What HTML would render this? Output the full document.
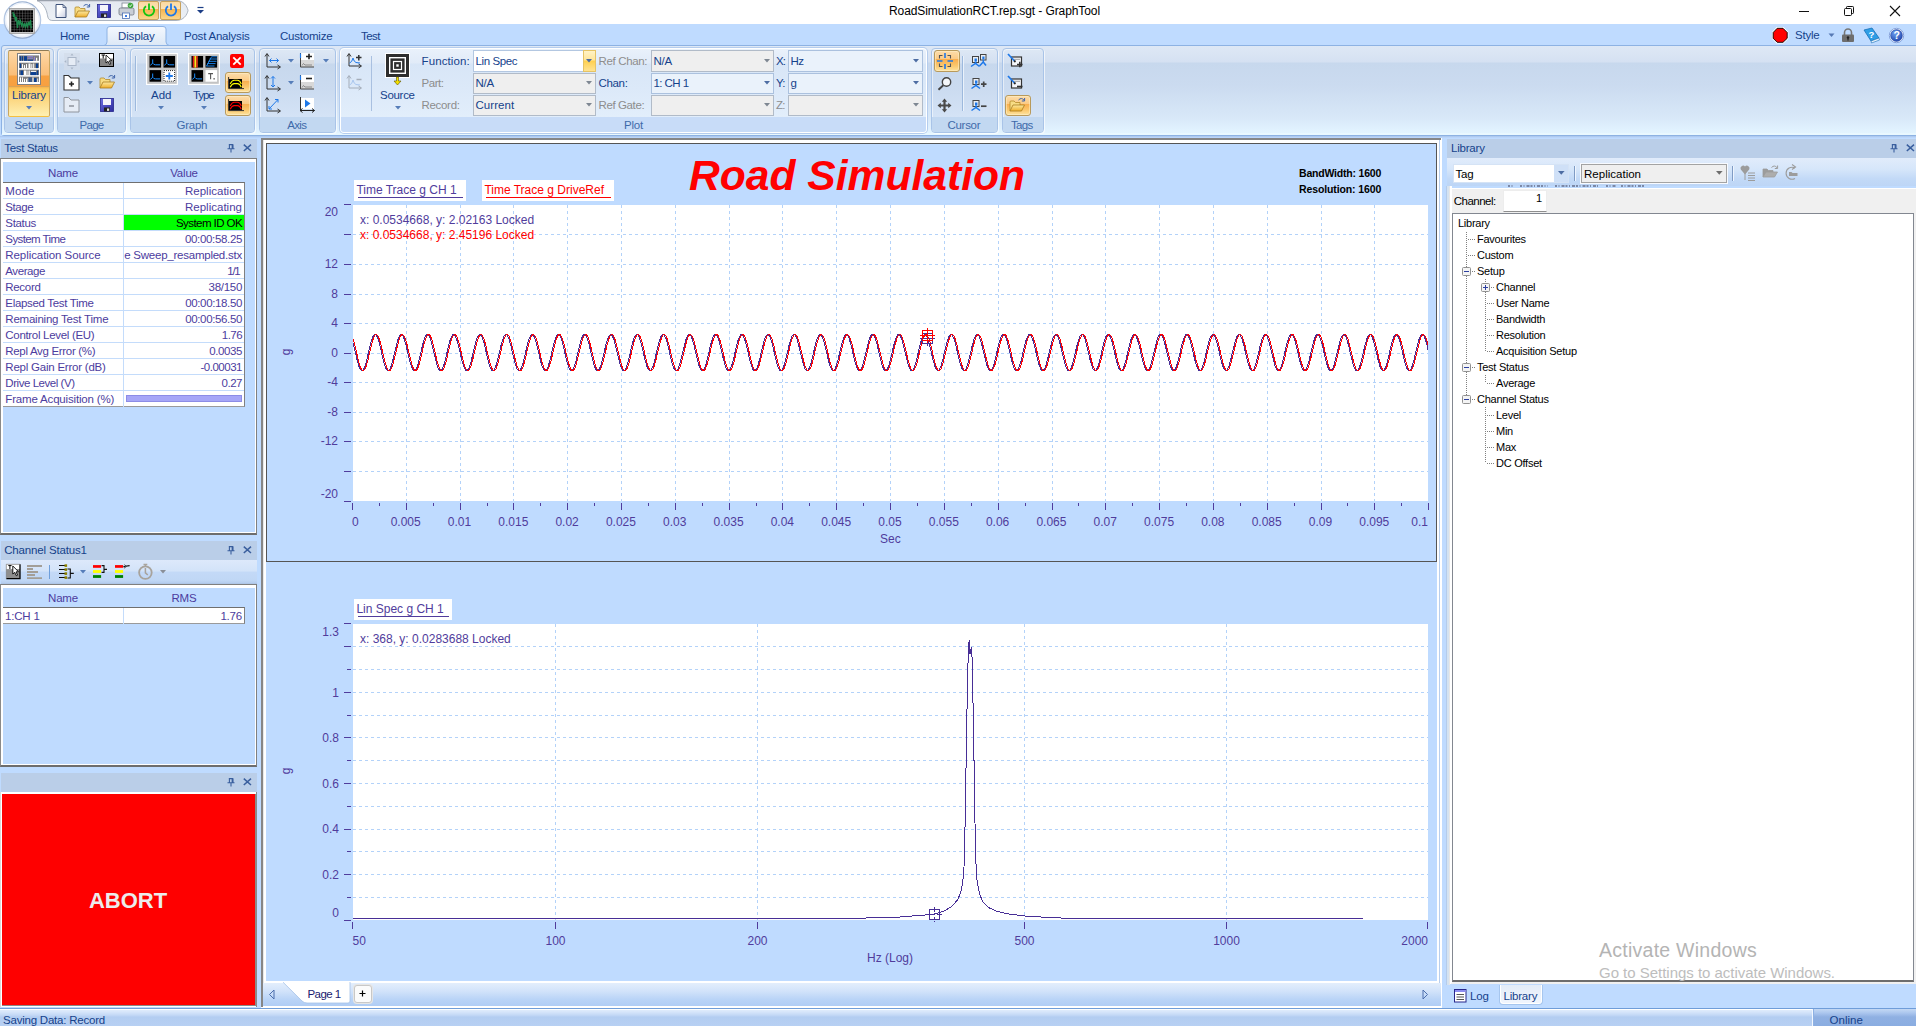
<!DOCTYPE html>
<html><head><meta charset="utf-8"><title>GraphTool</title>
<style>
html,body{margin:0;padding:0;}
body{width:1916px;height:1026px;overflow:hidden;background:#BFDBFF;font-family:"Liberation Sans", sans-serif;font-size:12px;position:relative;}
div,svg,span.a{position:absolute;box-sizing:border-box;}
svg{overflow:visible;}
</style></head>
<body>
<div style="left:0px;top:0px;width:1916px;height:24px;background:#fff;"></div>
<svg style="left:36px;top:0px;" width="160" height="22" viewBox="0 0 160 22"><defs><linearGradient id="qg" x1="0" y1="0" x2="0" y2="1"><stop offset="0" stop-color="#E4E9F0"/><stop offset="1" stop-color="#EDF1F6"/></linearGradient></defs><path d="M1,0.5 H140 C150,0.5 152,10 152,10.5 C152,11 150,20.5 140,20.5 H17 C11.5,20.5 12,17 11,13 C9.5,7 6,2.5 1,0.5 Z" fill="url(#qg)" stroke="#A9B2BF" stroke-width="1"/><path d="M1,0.6 H142" stroke="#9AA1AC" stroke-width="1.4" fill="none"/></svg>
<svg style="left:55px;top:3px;" width="13" height="16" viewBox="0 0 13 16"><defs><linearGradient id="nd" x1="0" y1="0" x2="1" y2="1"><stop offset="0.4" stop-color="#fff"/><stop offset="1" stop-color="#C5CBE0"/></linearGradient></defs><path d="M1,1.5 H8 L11,4.5 V14.5 H1 Z" fill="url(#nd)" stroke="#3C5078" stroke-width="1"/><path d="M8,1.5 V4.5 H11" fill="none" stroke="#3C5078" stroke-width="0.8"/></svg>
<svg style="left:74px;top:3px;" width="18" height="16" viewBox="0 0 18 16"><defs><linearGradient id="fo" x1="0" y1="0" x2="0" y2="1"><stop offset="0" stop-color="#FCE9A0"/><stop offset="1" stop-color="#EFAE2B"/></linearGradient></defs><path d="M1,14 V5 Q1,4 2,4 H5 L6.5,5.5 H11 V8" fill="#F7DC84" stroke="#B48A2A" stroke-width="0.8"/><path d="M1,14 L4,8 H15.5 L12.5,14 Z" fill="url(#fo)" stroke="#A87B1E" stroke-width="0.8"/><path d="M9.5,3 Q12.5,0 15,3.2" fill="none" stroke="#3E63A8" stroke-width="1"/><path d="M15.6,1 V4 H12.8" fill="none" stroke="#3E63A8" stroke-width="1"/></svg>
<svg style="left:97px;top:4px;" width="14" height="14" viewBox="0 0 14 14"><defs><linearGradient id="dk" x1="0" y1="0" x2="1" y2="1"><stop offset="0" stop-color="#6D6DE0"/><stop offset="1" stop-color="#2B2B9E"/></linearGradient></defs><rect x="0.5" y="0.5" width="13" height="13" fill="url(#dk)" stroke="#27278C" stroke-width="0.8"/><rect x="3" y="1" width="8" height="6" fill="#F4F4FA"/><rect x="4" y="9.5" width="6" height="4" fill="#222"/><rect x="7" y="10.5" width="2.2" height="2.4" fill="#ddd"/></svg>
<svg style="left:118px;top:2px;" width="18" height="18" viewBox="0 0 18 18"><rect x="4" y="1" width="8" height="5" fill="#fff" stroke="#7d8592" stroke-width="0.8"/><rect x="1" y="6" width="15" height="7" rx="1.5" fill="#C9CED6" stroke="#6E7682" stroke-width="0.8"/><rect x="4.5" y="11" width="7" height="5.5" fill="#fff" stroke="#4B6FB5" stroke-width="0.8"/><rect x="7" y="13" width="2" height="2" fill="#3D7BE0"/><circle cx="12.5" cy="3.5" r="2.8" fill="#3DA53D"/><path d="M11.2,3.5 L12.2,4.6 L13.9,2.4" stroke="#fff" stroke-width="0.9" fill="none"/></svg>
<div style="left:138px;top:1px;width:21px;height:19px;border:1px solid #C9A25C;border-radius:2px;background:linear-gradient(#FBD9A0 0%,#FCE2B4 40%,#F7B44E 42%,#FBD68B 100%);"></div>
<svg style="left:141px;top:2px;" width="16" height="16" viewBox="0 0 16 16"><path d="M5,4.2 A5.2,5.2 0 1 0 11,4.2" fill="none" stroke="#12C412" stroke-width="1.8"/><path d="M8,1.5 V8" stroke="#12C412" stroke-width="1.8"/></svg>
<div style="left:160px;top:1px;width:21px;height:19px;border:1px solid #C9A25C;border-radius:2px;background:linear-gradient(#FBD9A0 0%,#FCE2B4 40%,#F7B44E 42%,#FBD68B 100%);"></div>
<svg style="left:163px;top:2px;" width="16" height="16" viewBox="0 0 16 16"><path d="M5,4.2 A5.2,5.2 0 1 0 11,4.2" fill="none" stroke="#1E78E8" stroke-width="1.8"/><path d="M8,1.5 V8" stroke="#1E78E8" stroke-width="1.8"/></svg>
<svg style="left:196px;top:6px;" width="10" height="9" viewBox="0 0 10 9"><path d="M1.5,1.5 H7.5" stroke="#1C3E86" stroke-width="1.2"/><path d="M1,4 H8 L4.5,7.5 Z" fill="#1C3E86"/></svg>
<div style="left:889px;top:1.0px;height:20px;line-height:20px;font-size:12px;color:#000;white-space:pre;letter-spacing:-0.083px;">RoadSimulationRCT.rep.sgt - GraphTool</div>
<svg style="left:1795px;top:0px;" width="121" height="24" viewBox="0 0 121 24"><path d="M4,11.5 H14" stroke="#111" stroke-width="1"/><rect x="49.5" y="8.5" width="7" height="7" rx="1" fill="none" stroke="#111" stroke-width="1"/><path d="M51.5,8.5 V7.3 Q51.5,6.5 52.3,6.5 H57.7 Q58.5,6.5 58.5,7.3 V12.7 Q58.5,13.5 57.7,13.5 H56.5" fill="none" stroke="#111" stroke-width="1"/><path d="M95,6 L105,16 M105,6 L95,16" stroke="#111" stroke-width="1.1"/></svg>
<div style="left:0px;top:24px;width:1916px;height:21px;background:#BFDBFF;"></div>
<svg style="left:104px;top:24px;" width="66" height="22" viewBox="0 0 66 22"><defs><linearGradient id="tg" x1="0" y1="0" x2="0" y2="1"><stop offset="0" stop-color="#F4F8FE"/><stop offset="1" stop-color="#DCE8F6"/></linearGradient></defs><path d="M0,21.5 Q2.5,21.5 3,18 V5 Q3,2.5 6,2.5 H59 Q62,2.5 62,5 V18 Q62.5,21.5 65.5,21.5 Z" fill="url(#tg)" stroke="#8DB2E3" stroke-width="1"/><path d="M4,21.5 H61" stroke="#DCE8F6" stroke-width="1.5"/></svg>
<div style="left:60px;top:26.0px;height:20px;line-height:20px;font-size:11.5px;color:#15428B;white-space:pre;letter-spacing:-0.319px;">Home</div>
<div style="left:118px;top:26.0px;height:20px;line-height:20px;font-size:11.5px;color:#15428B;white-space:pre;letter-spacing:-0.144px;">Display</div>
<div style="left:184px;top:26.0px;height:20px;line-height:20px;font-size:11.5px;color:#15428B;white-space:pre;letter-spacing:-0.223px;">Post Analysis</div>
<div style="left:280px;top:26.0px;height:20px;line-height:20px;font-size:11.5px;color:#15428B;white-space:pre;letter-spacing:-0.213px;">Customize</div>
<div style="left:361px;top:26.0px;height:20px;line-height:20px;font-size:11.5px;color:#15428B;white-space:pre;letter-spacing:-0.522px;">Test</div>
<svg style="left:1770px;top:26px;" width="20" height="18" viewBox="0 0 20 18"><path d="M7.2,2.3 H13 L17.2,6.5 V12.3 L13,16.3 H7.2 L3.2,12.3 V6.5 Z" fill="#FF0000" stroke="#fff" stroke-width="2.4"/><path d="M7.2,2.3 H13 L17.2,6.5 V12.3 L13,16.3 H7.2 L3.2,12.3 V6.5 Z" fill="#FF0000" stroke="#000" stroke-width="0.9"/></svg>
<div style="left:1795px;top:25.0px;height:20px;line-height:20px;font-size:11.5px;color:#15428B;white-space:pre;letter-spacing:-0.2px;">Style</div>
<svg style="left:1828px;top:33px;" width="8" height="5" viewBox="0 0 8 5"><path d="M0.5,0.5 H6.5 L3.5,4 Z" fill="#5679B4"/></svg>
<svg style="left:1841px;top:28px;" width="14" height="15" viewBox="0 0 14 15"><path d="M3.5,7 V4.5 A3.3,3.3 0 0 1 10.5,4.5 V7" fill="none" stroke="#777" stroke-width="1.6"/><rect x="1" y="6.5" width="12" height="7.5" rx="1" fill="#6E6E6E"/><circle cx="7" cy="9.5" r="1.2" fill="#222"/><rect x="6.4" y="9.5" width="1.2" height="3" fill="#222"/></svg>
<svg style="left:1863px;top:27px;" width="18" height="17" viewBox="0 0 18 17"><path d="M1,3 L9,1 L16,11 L8,14 Z" fill="#2E9EE6" stroke="#1670B8" stroke-width="0.8"/><path d="M8,14 L16,11 L16.5,13 L8.5,16 Z" fill="#EAF2FA" stroke="#1670B8" stroke-width="0.6"/><text x="5.5" y="10.8" font-size="9.5" font-weight="bold" fill="#fff" font-family="Liberation Sans">?</text></svg>
<svg style="left:1888.5px;top:28px;" width="15" height="15" viewBox="0 0 15 15"><defs><radialGradient id="hg" cx="0.4" cy="0.3" r="0.8"><stop offset="0" stop-color="#6FA0F0"/><stop offset="1" stop-color="#1B3FA8"/></radialGradient></defs><circle cx="7.5" cy="7.5" r="7.2" fill="#fff" stroke="#6F8FD0" stroke-width="0.8"/><circle cx="7.5" cy="7.5" r="5.9" fill="url(#hg)" stroke="#2448A8" stroke-width="0.6"/><text x="4.6" y="11.3" font-size="10.5" font-weight="bold" fill="#fff" font-family="Liberation Sans">?</text></svg>
<svg style="left:0px;top:0px;" width="46" height="42" viewBox="0 0 46 42"><defs><radialGradient id="ab" cx="0.5" cy="0.45" r="0.6"><stop offset="0.72" stop-color="#fff"/><stop offset="1" stop-color="#CFDDF0"/></radialGradient><linearGradient id="abr" x1="0" y1="0" x2="0" y2="1"><stop offset="0" stop-color="#9DB3D3"/><stop offset="0.5" stop-color="#B9CBE6"/><stop offset="1" stop-color="#8FA6C9"/></linearGradient><pattern id="grd" width="2.75" height="2.75" patternUnits="userSpaceOnUse" x="11" y="10"><rect width="2.75" height="2.75" fill="#000"/><path d="M0,0 H2.75 M0,0 V2.75" stroke="#8a8a8a" stroke-width="0.7"/></pattern></defs><circle cx="22.4" cy="20" r="18.2" fill="url(#ab)" stroke="url(#abr)" stroke-width="1.3"/><circle cx="22.4" cy="20" r="16.8" fill="none" stroke="#E9F0FA" stroke-width="1"/><rect x="9.5" y="8.5" width="25" height="25" fill="#C9C9C9" stroke="#9c9c9c" stroke-width="0.8"/><rect x="11" y="10" width="22" height="22" fill="url(#grd)"/><path d="M13,12 L13.6,17 L14.5,14 L15.5,21 L16.3,17 L17.5,28 L18.5,20 L19.5,24 L20.5,21 L21.5,25.5 L22.5,23 L23.5,26.5 L24.5,24 L25.5,27 L26.5,23.5 L27.5,26.5 L28.5,22 L29.5,25.5 L30.5,20 L31.3,28.5" stroke="#1E8B4E" stroke-width="1.3" fill="none"/></svg>
<div style="left:0px;top:45px;width:1916px;height:91px;background:#BFDBFF;"></div>
<div style="left:1px;top:45px;width:1920px;height:90.5px;border:1px solid #8DB2E3;border-radius:3px;background:linear-gradient(to bottom,#DEE8F5 0px,#D5E1F2 16px,#C7D8ED 17px,#CBDBF0 40px,#D8E8F8 72px,#E1F2FE 84px,#E4F5FF 89px);"></div>
<div style="left:2px;top:133px;width:1914px;height:1.5px;background:#E9F8FF;"></div>
<div style="left:0px;top:135.5px;width:1916px;height:2.5px;background:linear-gradient(#A9C4EA,#BFDBFF);"></div>
<div style="left:4px;top:48px;width:50px;height:84.5px;border:1px solid #A9C4E8;border-radius:4px;background:linear-gradient(to bottom,#DEE8F5 0px,#D3E0F1 14px,#C7D8ED 15px,#CBDBF0 40px,#D4E3F6 68px);box-shadow:inset 1px 1px 0 0 rgba(255,255,255,0.5), 1px 1px 0 0 rgba(255,255,255,0.65);overflow:hidden;"><div style="left:-1px;top:68px;width:50px;height:16px;background:#C2D8F1;"></div></div>
<div style="left:14.5px;top:115.3px;height:20px;line-height:20px;font-size:11.5px;color:#3E6AAA;white-space:pre;letter-spacing:-0.33px;">Setup</div>
<div style="left:8px;top:50px;width:42px;height:66.5px;border:1px solid #C9A661;border-top-color:#8E7B56;border-bottom-color:#F5C040;border-radius:2px;background:linear-gradient(#FDD9A8 0px,#FCCB8F 12px,#FABE78 24px,#F7A243 25px,#F7A040 35px,#F9B24C 36px,#FBC95C 38px,#FCD986 50px,#FEEFB0 64px);"></div>
<div style="left:9px;top:86px;width:40px;height:1px;background:#D9A457;"></div>
<svg style="left:17px;top:53px;" width="24" height="32" viewBox="0 0 24 32"><rect x="0.5" y="0.5" width="23" height="31" fill="#fff" stroke="#808080" stroke-width="1"/><rect x="2" y="2.4" width="20" height="5.4" fill="#7d7d7d"/><rect x="2" y="9.7" width="20" height="5.4" fill="#7d7d7d"/><rect x="2" y="16.7" width="20" height="5.4" fill="#7d7d7d"/><rect x="2" y="23.6" width="20" height="5.4" fill="#7d7d7d"/><rect x="2.8" y="3.200000000000001" width="1.2" height="4.6" fill="#0A3F91"/><rect x="4.7" y="3.200000000000001" width="1.3" height="4.6" fill="#0A3F91"/><rect x="7" y="3.200000000000001" width="3" height="4.6" fill="#0A3F91"/><rect x="10.5" y="3.2" width="5.5" height="0.9" fill="#8C7FE0"/><rect x="10.5" y="4.8" width="5.5" height="0.9" fill="#8C7FE0"/><rect x="10.5" y="6.6" width="5.5" height="1.2" fill="#0A3F91"/><rect x="17" y="3.8000000000000007" width="1" height="4" fill="#8C7FE0"/><rect x="19" y="4.800000000000001" width="1.2" height="3" fill="#fff"/><rect x="2.8" y="10.5" width="1.3" height="4.6" fill="#0A3F91"/><rect x="5" y="11.1" width="1" height="4" fill="#fff"/><rect x="7" y="12.1" width="1" height="3" fill="#fff"/><rect x="9" y="11.1" width="1" height="4" fill="#fff"/><rect x="11.5" y="10.5" width="2" height="4.6" fill="#fff"/><rect x="14.3" y="11.1" width="1" height="4" fill="#fff"/><rect x="16.2" y="10.5" width="1" height="4.6" fill="#fff"/><rect x="19" y="10.5" width="2" height="4.6" fill="#0A3F91"/><rect x="3.5" y="17.5" width="2.5" height="4.6" fill="#0A3F91"/><rect x="7" y="17.5" width="2.5" height="4.6" fill="#fff"/><rect x="10.5" y="17.5" width="1" height="4.6" fill="#fff"/><rect x="12" y="17.5" width="0.8" height="4.6" fill="#fff"/><rect x="13.5" y="19.099999999999998" width="6" height="3" fill="#0A3F91"/><rect x="14" y="17.9" width="5" height="1" fill="#fff"/><rect x="20" y="17.5" width="1.2" height="4.6" fill="#0A3F91"/><rect x="3" y="24.4" width="1" height="4.6" fill="#fff"/><rect x="5" y="24.4" width="1" height="4.6" fill="#fff"/><rect x="7" y="25.8" width="1" height="3.2" fill="#fff"/><rect x="9" y="25.8" width="1" height="3.2" fill="#fff"/><rect x="10.6" y="25.0" width="0.7" height="4" fill="#fff"/><rect x="11.6" y="24.4" width="1" height="4.6" fill="#0A3F91"/><rect x="13.5" y="24.4" width="1" height="4.6" fill="#0A3F91"/><rect x="15.5" y="24.4" width="1" height="4.6" fill="#fff"/><rect x="17" y="25.0" width="2.5" height="4" fill="#0A3F91"/><rect x="20.3" y="25.6" width="0.8" height="3.4" fill="#fff"/></svg>
<div style="left:12px;top:85.0px;height:20px;line-height:20px;font-size:11.5px;color:#15428B;white-space:pre;letter-spacing:-0.207px;">Library</div>
<svg style="left:25.5px;top:105.8px;" width="6" height="4" viewBox="0 0 6 4"><path d="M0,0 H6 L3,3.6 Z" fill="#567DB9"/></svg>
<div style="left:57px;top:48px;width:68.6px;height:84.5px;border:1px solid #A9C4E8;border-radius:4px;background:linear-gradient(to bottom,#DEE8F5 0px,#D3E0F1 14px,#C7D8ED 15px,#CBDBF0 40px,#D4E3F6 68px);box-shadow:inset 1px 1px 0 0 rgba(255,255,255,0.5), 1px 1px 0 0 rgba(255,255,255,0.65);overflow:hidden;"><div style="left:-1px;top:68px;width:68.6px;height:16px;background:#C2D8F1;"></div></div>
<div style="left:79.5px;top:115.3px;height:20px;line-height:20px;font-size:11.5px;color:#3E6AAA;white-space:pre;letter-spacing:-0.714px;">Page</div>
<svg style="left:63.5px;top:52.8px;" width="18" height="18" viewBox="0 0 18 18"><rect x="0" y="0" width="16" height="17" fill="#D3DCE9" opacity="0.75"/><rect x="4" y="4.5" width="8" height="8" fill="#E6ECF5" stroke="#AAB6C8" stroke-width="1"/><path d="M8,0.5 L9.5,2.5 H6.5 Z M8,16.5 L9.5,14.5 H6.5 Z M0.3,8.5 L2.3,7 V10 Z M15.7,8.5 L13.7,7 V10 Z" fill="#A9B5C7"/></svg>
<svg style="left:99px;top:53px;" width="16" height="15" viewBox="0 0 16 15"><rect x="0.5" y="0.5" width="14" height="13" fill="#858585" stroke="#000" stroke-width="1"/><rect x="1" y="1" width="13" height="4.5" fill="#fff"/><path d="M2.5,2 H6 M4.2,2 V5.5" stroke="#000" stroke-width="1"/><path d="M7,2 L7,10 L9,8.3 L10.6,11.5 L11.8,10.9 L10.3,7.8 L12.8,7.6 Z" fill="#fff" stroke="#000" stroke-width="0.8"/></svg>
<svg style="left:63px;top:74px;" width="18" height="18" viewBox="0 0 18 18"><path d="M1,1.5 H5.5 L8,4 H16 V16 H1 Z" fill="#fff" stroke="#333" stroke-width="1.1"/><path d="M6,10 H11 M8.5,7.5 V12.5" stroke="#222" stroke-width="1.6"/></svg>
<svg style="left:86.5px;top:80.5px;" width="6" height="4" viewBox="0 0 6 4"><path d="M0,0 H6 L3,3.6 Z" fill="#567DB9"/></svg>
<svg style="left:99px;top:74px;" width="18" height="16" viewBox="0 0 18 16"><defs><linearGradient id="fo" x1="0" y1="0" x2="0" y2="1"><stop offset="0" stop-color="#FCE9A0"/><stop offset="1" stop-color="#EFAE2B"/></linearGradient></defs><path d="M1,14 V5 Q1,4 2,4 H5 L6.5,5.5 H11 V8" fill="#F7DC84" stroke="#B48A2A" stroke-width="0.8"/><path d="M1,14 L4,8 H15.5 L12.5,14 Z" fill="url(#fo)" stroke="#A87B1E" stroke-width="0.8"/><path d="M9.5,3 Q12.5,0 15,3.2" fill="none" stroke="#3E63A8" stroke-width="1"/><path d="M15.6,1 V4 H12.8" fill="none" stroke="#3E63A8" stroke-width="1"/></svg>
<svg style="left:63px;top:96px;" width="18" height="18" viewBox="0 0 18 18"><path d="M1,1.5 H5.5 L8,4 H16 V16 H1 Z" fill="#E6ECF5" stroke="#8f949c" stroke-width="1"/><path d="M6,10 H11" stroke="#8f949c" stroke-width="1.5"/></svg>
<svg style="left:100px;top:98px;" width="14" height="14" viewBox="0 0 14 14"><defs><linearGradient id="dk" x1="0" y1="0" x2="1" y2="1"><stop offset="0" stop-color="#6D6DE0"/><stop offset="1" stop-color="#2B2B9E"/></linearGradient></defs><rect x="0.5" y="0.5" width="13" height="13" fill="url(#dk)" stroke="#27278C" stroke-width="0.8"/><rect x="3" y="1" width="8" height="6" fill="#F4F4FA"/><rect x="4" y="9.5" width="6" height="4" fill="#222"/><rect x="7" y="10.5" width="2.2" height="2.4" fill="#ddd"/></svg>
<div style="left:129.5px;top:48px;width:125.0px;height:84.5px;border:1px solid #A9C4E8;border-radius:4px;background:linear-gradient(to bottom,#DEE8F5 0px,#D3E0F1 14px,#C7D8ED 15px,#CBDBF0 40px,#D4E3F6 68px);box-shadow:inset 1px 1px 0 0 rgba(255,255,255,0.5), 1px 1px 0 0 rgba(255,255,255,0.65);overflow:hidden;"><div style="left:-1px;top:68px;width:125.0px;height:16px;background:#C2D8F1;"></div></div>
<div style="left:176.5px;top:115.3px;height:20px;line-height:20px;font-size:11.5px;color:#3E6AAA;white-space:pre;letter-spacing:-0.252px;">Graph</div>
<div style="left:135px;top:56px;width:1px;height:55px;background:#9DB9DD;"></div>
<div style="left:136px;top:56px;width:1px;height:55px;background:#EAF2FB;"></div>
<svg style="left:146px;top:53px;" width="32" height="32" viewBox="0 0 32 32"><rect x="0" y="0" width="32" height="32" fill="#fff"/><rect x="1.2" y="1.2" width="29.6" height="29.6" fill="#C3C3C3"/><rect x="3.5" y="3" width="11.6" height="11.6" fill="#000"/><path d="M6.7,6.4 V10.2 L4.3,12.3 M6.7,10.2 Q7.7,11.8 9.5,11.8 H14.1" fill="none" stroke="#1E90FF" stroke-width="1"/><rect x="17.5" y="3" width="11.6" height="11.6" fill="#000"/><path d="M20.7,6.4 V10.2 L18.3,12.3 M20.7,10.2 Q21.7,11.8 23.5,11.8 H28.1" fill="none" stroke="#1E90FF" stroke-width="1"/><rect x="3.5" y="17.1" width="11.6" height="11.6" fill="#000"/><path d="M6.7,20.5 V24.3 L4.3,26.400000000000002 M6.7,24.3 Q7.7,25.900000000000002 9.5,25.900000000000002 H14.1" fill="none" stroke="#1E90FF" stroke-width="1"/><rect x="17.5" y="17.1" width="11.6" height="11.6" fill="#fff"/><rect x="18" y="17.6" width="10.6" height="10.6" fill="none" stroke="#222" stroke-width="1" stroke-dasharray="1,1"/><path d="M19.8,23 H26.8 M23.3,19.5 V26.5" stroke="#1E78E8" stroke-width="1.8"/></svg>
<div style="left:151px;top:85.0px;height:20px;line-height:20px;font-size:11.5px;color:#15428B;white-space:pre;letter-spacing:-0.02px;">Add</div>
<svg style="left:158.4px;top:105.8px;" width="6" height="4" viewBox="0 0 6 4"><path d="M0,0 H6 L3,3.6 Z" fill="#567DB9"/></svg>
<svg style="left:188px;top:53px;" width="32" height="32" viewBox="0 0 32 32"><rect x="0" y="0" width="32" height="32" fill="#fff"/><rect x="1.2" y="1.2" width="29.6" height="29.6" fill="#C3C3C3"/><rect x="3.5" y="3" width="11.6" height="11.6" fill="#000"/><rect x="4.8" y="3" width="1.6" height="11.6" fill="#E31B1B"/><rect x="6.4" y="3" width="1.7" height="11.6" fill="#FFE81E"/><rect x="8.1" y="3" width="1.7" height="11.6" fill="#E3401B"/><rect x="17.5" y="3" width="11.6" height="11.6" fill="#000"/><path d="M18.5,13.2 L23.5,3.8 H29 M21.5,6 H29 M20.3,8.3 H28.5 M19.3,10.6 H27.5 M18.3,13 H26.5" stroke="#1E90FF" stroke-width="0.9" fill="none"/><rect x="3.5" y="17.1" width="11.6" height="11.6" fill="#000"/><path d="M6.7,20.5 V24.3 L4.3,26.400000000000002 M6.7,24.3 Q7.7,25.900000000000002 9.5,25.900000000000002 H14.1" fill="none" stroke="#1E90FF" stroke-width="1"/><rect x="17.5" y="17.1" width="11.6" height="11.6" fill="#fff"/><path d="M20.2,20.6 H25 M22.6,20.6 V26.3" stroke="#555" stroke-width="1.1"/><rect x="25.3" y="25.3" width="1.7" height="1.1" fill="#555"/></svg>
<div style="left:193px;top:85.0px;height:20px;line-height:20px;font-size:11.5px;color:#15428B;white-space:pre;letter-spacing:-1.057px;">Type</div>
<svg style="left:200.5px;top:105.8px;" width="6" height="4" viewBox="0 0 6 4"><path d="M0,0 H6 L3,3.6 Z" fill="#567DB9"/></svg>
<svg style="left:230px;top:54px;" width="14" height="14" viewBox="0 0 14 14"><rect x="0" y="0" width="14" height="14" rx="2.2" fill="#FF0000"/><path d="M3.3,3.3 L10.7,10.7 M10.7,3.3 L3.3,10.7" stroke="#fff" stroke-width="1.8"/></svg>
<div style="left:225px;top:72.2px;width:26px;height:21px;border:1px solid #B89A5C;border-radius:3px;background:linear-gradient(#FCDCAA 0%,#FBCB86 40%,#F9AE4E 42%,#FBC96F 75%,#FDE3A0 100%);box-shadow:inset 0 0 0 1px rgba(255,240,200,0.55);"></div>
<div style="left:225px;top:94.6px;width:26px;height:21px;border:1px solid #B89A5C;border-radius:3px;background:linear-gradient(#FCDCAA 0%,#FBCB86 40%,#F9AE4E 42%,#FBC96F 75%,#FDE3A0 100%);box-shadow:inset 0 0 0 1px rgba(255,240,200,0.55);"></div>
<svg style="left:228px;top:77px;" width="18" height="13" viewBox="0 0 18 13"><rect x="1" y="2" width="13" height="9.5" fill="#000"/><path d="M0.6,0 V11.6 H16" fill="none" stroke="#333" stroke-width="1"/><path d="M2.2,7 Q4,3.3 6.2,3.3 H9.5 Q11.8,3.3 13.3,7 M2.2,10.3 Q4,6.6 6.2,6.6 H9.5 Q11.8,6.6 13.3,10.3" fill="none" stroke="#FFFF00" stroke-width="1.1"/></svg>
<svg style="left:228px;top:99px;" width="18" height="13" viewBox="0 0 18 13"><rect x="1" y="2" width="13" height="9.5" fill="#000"/><path d="M0.6,0 V11.6 H16" fill="none" stroke="#333" stroke-width="1"/><path d="M2.2,7 Q4,3.3 6.2,3.3 H9.5 Q11.8,3.3 13.3,7 M2.2,10.3 Q4,6.6 6.2,6.6 H9.5 Q11.8,6.6 13.3,10.3" fill="none" stroke="#FF0000" stroke-width="1.1"/></svg>
<div style="left:258.5px;top:48px;width:77.0px;height:84.5px;border:1px solid #A9C4E8;border-radius:4px;background:linear-gradient(to bottom,#DEE8F5 0px,#D3E0F1 14px,#C7D8ED 15px,#CBDBF0 40px,#D4E3F6 68px);box-shadow:inset 1px 1px 0 0 rgba(255,255,255,0.5), 1px 1px 0 0 rgba(255,255,255,0.65);overflow:hidden;"><div style="left:-1px;top:68px;width:77.0px;height:16px;background:#C2D8F1;"></div></div>
<div style="left:287.3px;top:115.3px;height:20px;line-height:20px;font-size:11.5px;color:#3E6AAA;white-space:pre;letter-spacing:-0.682px;">Axis</div>
<svg style="left:264px;top:53px;" width="18" height="17" viewBox="0 0 18 17"><path d="M3,1 V14 H16" fill="none" stroke="#333" stroke-width="1"/><path d="M1,3.5 L3,0.5 L5,3.5 M13.5,12 L16.5,14 L13.5,16" fill="none" stroke="#333" stroke-width="1"/><path d="M5.5,7.5 H14.5 M7.5,5.5 L5.5,7.5 L7.5,9.5 M12.5,5.5 L14.5,7.5 L12.5,9.5" fill="none" stroke="#1E78E8" stroke-width="1"/></svg>
<svg style="left:287.5px;top:58.5px;" width="6" height="4" viewBox="0 0 6 4"><path d="M0,0 H6 L3,3.6 Z" fill="#567DB9"/></svg>
<svg style="left:264px;top:75px;" width="18" height="17" viewBox="0 0 18 17"><path d="M3,1 V14 H16" fill="none" stroke="#333" stroke-width="1"/><path d="M1,3.5 L3,0.5 L5,3.5 M13.5,12 L16.5,14 L13.5,16" fill="none" stroke="#333" stroke-width="1"/><path d="M9,1.5 V12 M7,3.5 L9,1.5 L11,3.5 M7,10 L9,12 L11,10" fill="none" stroke="#1E78E8" stroke-width="1"/></svg>
<svg style="left:287.5px;top:80.5px;" width="6" height="4" viewBox="0 0 6 4"><path d="M0,0 H6 L3,3.6 Z" fill="#567DB9"/></svg>
<svg style="left:264px;top:97px;" width="18" height="17" viewBox="0 0 18 17"><path d="M3,1 V14 H16" fill="none" stroke="#333" stroke-width="1"/><path d="M1,3.5 L3,0.5 L5,3.5 M13.5,12 L16.5,14 L13.5,16" fill="none" stroke="#333" stroke-width="1"/><path d="M5,12 L14,2.5 M5,9 V12 H8 M11,2.5 H14 V5.5" fill="none" stroke="#1E78E8" stroke-width="1"/></svg>
<svg style="left:299px;top:53px;" width="16" height="15" viewBox="0 0 16 15"><rect x="1" y="4" width="14" height="10" fill="#D8D8D8"/><rect x="1" y="0" width="14" height="7" fill="#fff"/><path d="M1.5,0 V14 H15" fill="none" stroke="#444" stroke-width="1"/><path d="M1.5,0.5 V5" stroke="#1E78E8" stroke-width="1.2"/><path d="M3,12.5 L4.5,10.5 L6,12 H13" fill="none" stroke="#777" stroke-width="0.8"/><path d="M7,3.5 H13 M10,0.8 V6.2" stroke="#222" stroke-width="1.6"/></svg>
<svg style="left:322.5px;top:58.5px;" width="6" height="4" viewBox="0 0 6 4"><path d="M0,0 H6 L3,3.6 Z" fill="#567DB9"/></svg>
<svg style="left:299px;top:75px;" width="16" height="15" viewBox="0 0 16 15"><rect x="1" y="4" width="14" height="10" fill="#D8D8D8"/><rect x="1" y="0" width="14" height="7" fill="#fff"/><path d="M1.5,0 V14 H15" fill="none" stroke="#444" stroke-width="1"/><path d="M1.5,0.5 V5" stroke="#1E78E8" stroke-width="1.2"/><path d="M3,12.5 L4.5,10.5 L6,12 H13" fill="none" stroke="#777" stroke-width="0.8"/><path d="M7,3.5 H13" stroke="#222" stroke-width="1.6"/></svg>
<svg style="left:299px;top:97px;" width="17" height="17" viewBox="0 0 17 17"><rect x="2" y="1" width="13" height="11" fill="#fff"/><path d="M1.5,0 V14" stroke="#333" stroke-width="1"/><path d="M6,2.5 L11.5,6.5 L6,10.5 Z" fill="#1E78E8"/><path d="M1,13.5 H15.5 M3.5,11.5 L1,13.5 L3.5,15.5 M13,11.5 L15.5,13.5 L13,15.5" fill="none" stroke="#222" stroke-width="1"/></svg>
<div style="left:339.5px;top:48px;width:587.0px;height:84.5px;border:1px solid #fff;border-radius:4px;background:linear-gradient(to bottom,#E9F1FB 0px,#E1EBF8 14px,#D8E6F7 15px,#DCE9F9 40px,#E2EEFB 68px);box-shadow:0 0 0 1px #B5CDEE;overflow:hidden;"><div style="left:-1px;top:68px;width:587.0px;height:16px;background:#C8DCF8;"></div></div>
<div style="left:624px;top:115.3px;height:20px;line-height:20px;font-size:11.5px;color:#3E6AAA;white-space:pre;letter-spacing:-0.204px;">Plot</div>
<svg style="left:346px;top:53px;" width="17" height="16" viewBox="0 0 17 16"><path d="M3,1 V13 H15" fill="none" stroke="#333" stroke-width="1"/><path d="M1,3.5 L3,0.5 L5,3.5 M12.5,11 L15.5,13 L12.5,15" fill="none" stroke="#333" stroke-width="1"/><path d="M3.5,10 Q6,9.5 7,5 Q8,9 10,9.5 L14,10" fill="none" stroke="#1E78E8" stroke-width="1"/><path d="M10,4.5 H15.5 M12.8,2 V7.5" stroke="#333" stroke-width="1.5"/></svg>
<svg style="left:346px;top:75px;" width="17" height="16" viewBox="0 0 17 16"><path d="M3,1 V13 H15" fill="none" stroke="#A4ADB9" stroke-width="1"/><path d="M1,3.5 L3,0.5 L5,3.5 M12.5,11 L15.5,13 L12.5,15" fill="none" stroke="#A4ADB9" stroke-width="1"/><path d="M3.5,10 Q6,9.5 7,5 Q8,9 10,9.5 L14,10" fill="none" stroke="#A9C6EE" stroke-width="1"/><path d="M10.5,4.5 H15.5" stroke="#A4ADB9" stroke-width="1.5"/></svg>
<div style="left:371px;top:56px;width:1px;height:55px;background:#A9C0E0;"></div>
<svg style="left:385px;top:53px;" width="25" height="33" viewBox="0 0 25 33"><rect x="0" y="0" width="25" height="25" fill="#fff"/><rect x="1" y="1" width="23" height="23" fill="#2E2E2E"/><rect x="4" y="4" width="17" height="17" fill="#fff"/><rect x="5.4" y="5.4" width="14.2" height="14.2" fill="#2E2E2E"/><rect x="7.9" y="7.9" width="9.2" height="9.2" fill="#fff"/><rect x="9.1" y="9.1" width="6.800000000000001" height="6.800000000000001" fill="#2E2E2E"/><rect x="11.3" y="11.3" width="2.3999999999999986" height="2.3999999999999986" fill="#fff"/><path d="M11.5,24 H13.5 V28 H16 L12.5,32 L9,28 H11.5 Z" fill="#F5E000" stroke="#5b5300" stroke-width="0.6"/></svg>
<div style="left:380px;top:85.0px;height:20px;line-height:20px;font-size:11.5px;color:#15428B;white-space:pre;letter-spacing:-0.289px;">Source</div>
<svg style="left:394.5px;top:105.8px;" width="6" height="4" viewBox="0 0 6 4"><path d="M0,0 H6 L3,3.6 Z" fill="#567DB9"/></svg>
<div style="left:421.5px;top:51.0px;height:20px;line-height:20px;font-size:11.5px;color:#15428B;white-space:pre;letter-spacing:0.111px;">Function:</div>
<div style="left:421.5px;top:73.0px;height:20px;line-height:20px;font-size:11.5px;color:#8D8D8D;white-space:pre;letter-spacing:-0.437px;">Part:</div>
<div style="left:421.5px;top:95.0px;height:20px;line-height:20px;font-size:11.5px;color:#8D8D8D;white-space:pre;letter-spacing:-0.309px;">Record:</div>
<div style="left:473px;top:50px;width:122.5px;height:22px;border:1px solid #B3C7E1;background:#fff;"></div>
<div style="left:582.5px;top:50px;width:13px;height:22px;border:1px solid #E5C365;background:linear-gradient(#FFF3C6 0%,#FFE59A 45%,#FFD04F 50%,#FFE391 100%);"></div>
<svg style="left:586.0px;top:58.5px;" width="6" height="4" viewBox="0 0 6 4"><path d="M0,0 H6 L3,3.6 Z" fill="#4D6DA3"/></svg>
<div style="left:475.5px;top:50.5px;height:20px;line-height:20px;font-size:11.5px;color:#15428B;white-space:pre;letter-spacing:-0.381px;">Lin Spec</div>
<div style="left:473px;top:72.5px;width:122.5px;height:21.5px;border:1px solid #B1BBC8;background:#EFEFEF;"></div>
<svg style="left:585.5px;top:80.75px;" width="6" height="4" viewBox="0 0 6 4"><path d="M0,0 H6 L3,3.6 Z" fill="#7E8792"/></svg>
<div style="left:475.5px;top:72.75px;height:20px;line-height:20px;font-size:11.5px;color:#15428B;white-space:pre;letter-spacing:-0.19px;">N/A</div>
<div style="left:473px;top:94.5px;width:122.5px;height:21px;border:1px solid #B1BBC8;background:#EFEFEF;"></div>
<svg style="left:585.5px;top:102.5px;" width="6" height="4" viewBox="0 0 6 4"><path d="M0,0 H6 L3,3.6 Z" fill="#7E8792"/></svg>
<div style="left:475.5px;top:94.5px;height:20px;line-height:20px;font-size:11.5px;color:#15428B;white-space:pre;letter-spacing:0.051px;">Current</div>
<div style="left:598.5px;top:51.0px;height:20px;line-height:20px;font-size:11.5px;color:#8D8D8D;white-space:pre;letter-spacing:-0.342px;">Ref Chan:</div>
<div style="left:598.5px;top:73.0px;height:20px;line-height:20px;font-size:11.5px;color:#15428B;white-space:pre;letter-spacing:-0.337px;">Chan:</div>
<div style="left:598.5px;top:95.0px;height:20px;line-height:20px;font-size:11.5px;color:#8D8D8D;white-space:pre;letter-spacing:-0.391px;">Ref Gate:</div>
<div style="left:651px;top:50px;width:122.7px;height:22px;border:1px solid #B1BBC8;background:#EFEFEF;"></div>
<svg style="left:763.7px;top:58.5px;" width="6" height="4" viewBox="0 0 6 4"><path d="M0,0 H6 L3,3.6 Z" fill="#7E8792"/></svg>
<div style="left:653.5px;top:50.5px;height:20px;line-height:20px;font-size:11.5px;color:#15428B;white-space:pre;letter-spacing:-0.19px;">N/A</div>
<div style="left:651px;top:72.5px;width:122.7px;height:21.5px;border:1px solid #ABC1DE;background:#EAF2FB;"></div>
<svg style="left:763.7px;top:80.75px;" width="6" height="4" viewBox="0 0 6 4"><path d="M0,0 H6 L3,3.6 Z" fill="#4D6DA3"/></svg>
<div style="left:653.5px;top:72.75px;height:20px;line-height:20px;font-size:11.5px;color:#15428B;white-space:pre;letter-spacing:-0.569px;">1: CH 1</div>
<div style="left:651px;top:94.5px;width:122.7px;height:21px;border:1px solid #B1BBC8;background:#EFEFEF;"></div>
<svg style="left:763.7px;top:102.5px;" width="6" height="4" viewBox="0 0 6 4"><path d="M0,0 H6 L3,3.6 Z" fill="#7E8792"/></svg>
<div style="left:776px;top:51.0px;height:20px;line-height:20px;font-size:11.5px;color:#15428B;white-space:pre;letter-spacing:-0.933px;">X:</div>
<div style="left:776px;top:73.0px;height:20px;line-height:20px;font-size:11.5px;color:#15428B;white-space:pre;letter-spacing:-0.866px;">Y:</div>
<div style="left:776px;top:95.0px;height:20px;line-height:20px;font-size:11.5px;color:#8D8D8D;white-space:pre;letter-spacing:-0.859px;">Z:</div>
<div style="left:788px;top:50px;width:134.5px;height:22px;border:1px solid #ABC1DE;background:#EAF2FB;"></div>
<svg style="left:912.5px;top:58.5px;" width="6" height="4" viewBox="0 0 6 4"><path d="M0,0 H6 L3,3.6 Z" fill="#4D6DA3"/></svg>
<div style="left:790.5px;top:50.5px;height:20px;line-height:20px;font-size:11.5px;color:#15428B;white-space:pre;letter-spacing:-0.678px;">Hz</div>
<div style="left:788px;top:72.5px;width:134.5px;height:21.5px;border:1px solid #ABC1DE;background:#EAF2FB;"></div>
<svg style="left:912.5px;top:80.75px;" width="6" height="4" viewBox="0 0 6 4"><path d="M0,0 H6 L3,3.6 Z" fill="#4D6DA3"/></svg>
<div style="left:790.5px;top:72.75px;height:20px;line-height:20px;font-size:11.5px;color:#15428B;white-space:pre;letter-spacing:-0.395px;">g</div>
<div style="left:788px;top:94.5px;width:134.5px;height:21px;border:1px solid #B1BBC8;background:#EFEFEF;"></div>
<svg style="left:912.5px;top:102.5px;" width="6" height="4" viewBox="0 0 6 4"><path d="M0,0 H6 L3,3.6 Z" fill="#7E8792"/></svg>
<div style="left:930.5px;top:48px;width:67.0px;height:84.5px;border:1px solid #A9C4E8;border-radius:4px;background:linear-gradient(to bottom,#DEE8F5 0px,#D3E0F1 14px,#C7D8ED 15px,#CBDBF0 40px,#D4E3F6 68px);box-shadow:inset 1px 1px 0 0 rgba(255,255,255,0.5), 1px 1px 0 0 rgba(255,255,255,0.65);overflow:hidden;"><div style="left:-1px;top:68px;width:67.0px;height:16px;background:#C2D8F1;"></div></div>
<div style="left:947.5px;top:115.3px;height:20px;line-height:20px;font-size:11.5px;color:#3E6AAA;white-space:pre;letter-spacing:-0.301px;">Cursor</div>
<div style="left:934px;top:50px;width:26px;height:21.5px;border:1px solid #B89A5C;border-radius:3px;background:linear-gradient(#FCDCAA 0%,#FBCB86 40%,#F9AE4E 42%,#FBC96F 75%,#FDE3A0 100%);box-shadow:inset 0 0 0 1px rgba(255,240,200,0.55);"></div>
<svg style="left:936px;top:52px;" width="18" height="18" viewBox="0 0 18 18"><path d="M9,1 V6 M9,12 V17 M1,9 H6.5 M11.5,9 H17" stroke="#1E78E8" stroke-width="1.6"/><path d="M3.5,6.5 V3.5 H6.5 M11.5,3.5 H14.5 V6.5 M14.5,11.5 V14.5 H11.5 M6.5,14.5 H3.5 V11.5" fill="none" stroke="#555" stroke-width="1.1"/></svg>
<svg style="left:937px;top:76px;" width="17" height="17" viewBox="0 0 17 17"><circle cx="9.5" cy="6" r="4.2" fill="#F6F8FB" stroke="#444" stroke-width="1.4"/><path d="M6.3,9.2 L1.5,13.8" stroke="#444" stroke-width="1.9"/></svg>
<svg style="left:937px;top:98px;" width="16" height="16" viewBox="0 0 16 16"><path d="M7.5,0.5 L10.2,3.8 H8.6 V6.4 H11.2 V4.8 L14.5,7.5 L11.2,10.2 V8.6 H8.6 V11.2 H10.2 L7.5,14.5 L4.8,11.2 H6.4 V8.6 H3.8 V10.2 L0.5,7.5 L3.8,4.8 V6.4 H6.4 V3.8 H4.8 Z" fill="#4a4a4a"/></svg>
<div style="left:962px;top:56px;width:1px;height:55px;background:#9DB9DD;"></div>
<div style="left:963px;top:56px;width:1px;height:55px;background:#EAF2FB;"></div>
<svg style="left:970px;top:52px;" width="18" height="16" viewBox="0 0 18 16"><rect x="2.5" y="4.5" width="6" height="6" fill="#E9EEF5" stroke="#444" stroke-width="1"/><rect x="4.5" y="6.5" width="2.4" height="3" fill="#1E78E8"/><path d="M1.0,14.5 L5.5,11.5 L9.5,14.5" fill="none" stroke="#1E78E8" stroke-width="1.5"/><path d="M5.6,9.5 V12.0" stroke="#1E78E8" stroke-width="1.6"/><rect x="10.5" y="2.5" width="5.5" height="5.5" fill="#E9EEF5" stroke="#444" stroke-width="1"/><rect x="12.3" y="4.5" width="2.2" height="3" fill="#1E78E8"/><path d="M9.5,14 L13.2,10 L16,13.5 M13.3,8 V10.5" fill="none" stroke="#1E78E8" stroke-width="1.5"/></svg>
<svg style="left:970px;top:74px;" width="18" height="16" viewBox="0 0 18 16"><rect x="3" y="4.5" width="6" height="6" fill="#E9EEF5" stroke="#444" stroke-width="1"/><rect x="5" y="6.5" width="2.4" height="3" fill="#1E78E8"/><path d="M1.5,14.5 L6,11.5 L10,14.5" fill="none" stroke="#1E78E8" stroke-width="1.5"/><path d="M6.1,9.5 V12.0" stroke="#1E78E8" stroke-width="1.6"/><path d="M11,10.2 H16.5 M13.7,7.5 V13" stroke="#444" stroke-width="1.7"/></svg>
<svg style="left:970px;top:96px;" width="18" height="16" viewBox="0 0 18 16"><rect x="3" y="4.5" width="6" height="6" fill="#E9EEF5" stroke="#444" stroke-width="1"/><rect x="5" y="6.5" width="2.4" height="3" fill="#1E78E8"/><path d="M1.5,14.5 L6,11.5 L10,14.5" fill="none" stroke="#1E78E8" stroke-width="1.5"/><path d="M6.1,9.5 V12.0" stroke="#1E78E8" stroke-width="1.6"/><path d="M11,10.2 H16.5" stroke="#444" stroke-width="1.7"/></svg>
<div style="left:1001.5px;top:48px;width:42.0px;height:84.5px;border:1px solid #A9C4E8;border-radius:4px;background:linear-gradient(to bottom,#DEE8F5 0px,#D3E0F1 14px,#C7D8ED 15px,#CBDBF0 40px,#D4E3F6 68px);box-shadow:inset 1px 1px 0 0 rgba(255,255,255,0.5), 1px 1px 0 0 rgba(255,255,255,0.65);overflow:hidden;"><div style="left:-1px;top:68px;width:42.0px;height:16px;background:#C2D8F1;"></div></div>
<div style="left:1011px;top:115.3px;height:20px;line-height:20px;font-size:11.5px;color:#3E6AAA;white-space:pre;letter-spacing:-0.648px;">Tags</div>
<svg style="left:1007px;top:53px;" width="17" height="16" viewBox="0 0 17 16"><rect x="4.5" y="4" width="10" height="9" fill="#F4F6FA" stroke="#333" stroke-width="1.2"/><path d="M6,6.3 H13" stroke="#888" stroke-width="0.8"/><path d="M1,1 L7.5,8" stroke="#1E78E8" stroke-width="1.7"/><circle cx="7.8" cy="8.3" r="1.1" fill="#222"/><path d="M10,11.5 H15.5 M12.8,8.8 V14.2" stroke="#333" stroke-width="1.6"/></svg>
<svg style="left:1007px;top:75px;" width="17" height="16" viewBox="0 0 17 16"><rect x="4.5" y="4" width="10" height="9" fill="#F4F6FA" stroke="#333" stroke-width="1.2"/><path d="M6,6.3 H13" stroke="#888" stroke-width="0.8"/><path d="M1,1 L7.5,8" stroke="#1E78E8" stroke-width="1.7"/><circle cx="7.8" cy="8.3" r="1.1" fill="#222"/><path d="M10,11.5 H15.5" stroke="#333" stroke-width="1.6"/></svg>
<div style="left:1005px;top:94.5px;width:26px;height:21px;border:1px solid #B89A5C;border-radius:3px;background:linear-gradient(#FCDCAA 0%,#FBCB86 40%,#F9AE4E 42%,#FBC96F 75%,#FDE3A0 100%);box-shadow:inset 0 0 0 1px rgba(255,240,200,0.55);"></div>
<svg style="left:1009px;top:97px;" width="18" height="16" viewBox="0 0 18 16"><defs><linearGradient id="fo" x1="0" y1="0" x2="0" y2="1"><stop offset="0" stop-color="#FCE9A0"/><stop offset="1" stop-color="#EFAE2B"/></linearGradient></defs><path d="M1,14 V5 Q1,4 2,4 H5 L6.5,5.5 H11 V8" fill="#F7DC84" stroke="#B48A2A" stroke-width="0.8"/><path d="M1,14 L4,8 H15.5 L12.5,14 Z" fill="url(#fo)" stroke="#A87B1E" stroke-width="0.8"/><path d="M9.5,3 Q12.5,0 15,3.2" fill="none" stroke="#3E63A8" stroke-width="1"/><path d="M15.6,1 V4 H12.8" fill="none" stroke="#3E63A8" stroke-width="1"/></svg>
<div style="left:1px;top:138.5px;width:255.5px;height:19.5px;background:#BACEE8;"></div>
<div style="left:4.2px;top:138.2px;height:20px;line-height:20px;font-size:11.5px;color:#15428B;white-space:pre;letter-spacing:-0.308px;">Test Status</div>
<svg style="left:227.0px;top:143.5px;" width="8" height="9" viewBox="0 0 8 9"><path d="M1.8,0.6 H6.2 M2.4,0.6 V4.6 M5.2,0.6 V4.6 M6,0.6 V4.6 M0.5,4.8 H7.5 M4,5 V8.5" fill="none" stroke="#3A5F9E" stroke-width="1.1"/></svg>
<svg style="left:242.5px;top:144.0px;" width="9" height="8" viewBox="0 0 9 8"><path d="M0.8,0.6 L8,7 M8,0.6 L0.8,7" stroke="#3A5F9E" stroke-width="1.5"/></svg>
<div style="left:0px;top:158px;width:257px;height:376.7px;background:#BFDBFF;border-top:1px solid #7F7F7F;border-left:1px solid #8a8a8a;border-bottom:2px solid #6d6d6d;border-right:1px solid #808080;box-shadow:inset 2px 3px 0 #fff, inset -1px -1px 0 #fff;"></div>
<div style="left:3px;top:162.5px;height:20px;line-height:20px;font-size:11.5px;color:#4C3C9E;white-space:pre;width:120px;text-align:center;letter-spacing:-0.2px;">Name</div>
<div style="left:124px;top:162.5px;height:20px;line-height:20px;font-size:11.5px;color:#4C3C9E;white-space:pre;width:120px;text-align:center;letter-spacing:-0.2px;">Value</div>
<div style="left:3px;top:182px;width:242px;height:224.7px;background:#fff;border-top:1px solid #6F6F6F;border-right:1px solid #808080;border-bottom:1px solid #9a9a9a;"></div>
<div style="left:5.3px;top:180.6px;height:20px;line-height:20px;font-size:11.5px;color:#4C3C9E;white-space:pre;letter-spacing:0.109px;">Mode</div>
<div style="left:124px;top:180.6px;height:20px;line-height:20px;font-size:11.5px;color:#4C3C9E;white-space:pre;width:118px;text-align:right;letter-spacing:0.01px;">Replication</div>
<div style="left:3px;top:198px;width:241px;height:1px;background:#C4DCFB;"></div>
<div style="left:5.3px;top:196.6px;height:20px;line-height:20px;font-size:11.5px;color:#4C3C9E;white-space:pre;letter-spacing:-0.45px;">Stage</div>
<div style="left:124px;top:196.6px;height:20px;line-height:20px;font-size:11.5px;color:#4C3C9E;white-space:pre;width:118px;text-align:right;letter-spacing:0.01px;">Replicating</div>
<div style="left:3px;top:214px;width:241px;height:1px;background:#C4DCFB;"></div>
<div style="left:124px;top:215px;width:120px;height:15px;background:#00FF00;"></div>
<div style="left:5.3px;top:212.6px;height:20px;line-height:20px;font-size:11.5px;color:#4C3C9E;white-space:pre;letter-spacing:-0.333px;">Status</div>
<div style="left:124px;top:212.6px;height:20px;line-height:20px;font-size:11.5px;color:#000;white-space:pre;width:118px;text-align:right;letter-spacing:-0.57px;">System ID OK</div>
<div style="left:3px;top:230px;width:241px;height:1px;background:#C4DCFB;"></div>
<div style="left:5.3px;top:228.6px;height:20px;line-height:20px;font-size:11.5px;color:#4C3C9E;white-space:pre;letter-spacing:-0.587px;">System Time</div>
<div style="left:124px;top:228.6px;height:20px;line-height:20px;font-size:11.5px;color:#4C3C9E;white-space:pre;width:118px;text-align:right;letter-spacing:-0.34px;">00:00:58.25</div>
<div style="left:3px;top:246px;width:241px;height:1px;background:#C4DCFB;"></div>
<div style="left:5.3px;top:244.6px;height:20px;line-height:20px;font-size:11.5px;color:#4C3C9E;white-space:pre;letter-spacing:-0.068px;">Replication Source</div>
<div style="left:124px;top:244.6px;height:20px;line-height:20px;font-size:11.5px;color:#4C3C9E;white-space:pre;width:118px;text-align:right;letter-spacing:-0.235px;">e Sweep_resampled.stx</div>
<div style="left:3px;top:262px;width:241px;height:1px;background:#C4DCFB;"></div>
<div style="left:5.3px;top:260.6px;height:20px;line-height:20px;font-size:11.5px;color:#4C3C9E;white-space:pre;letter-spacing:-0.417px;">Average</div>
<div style="left:124px;top:260.6px;height:20px;line-height:20px;font-size:11.5px;color:#4C3C9E;white-space:pre;width:115.5px;text-align:right;letter-spacing:-1.262px;">1/1</div>
<div style="left:3px;top:278px;width:241px;height:1px;background:#C4DCFB;"></div>
<div style="left:5.3px;top:276.6px;height:20px;line-height:20px;font-size:11.5px;color:#4C3C9E;white-space:pre;letter-spacing:-0.312px;">Record</div>
<div style="left:124px;top:276.6px;height:20px;line-height:20px;font-size:11.5px;color:#4C3C9E;white-space:pre;width:118px;text-align:right;letter-spacing:-0.295px;">38/150</div>
<div style="left:3px;top:294px;width:241px;height:1px;background:#C4DCFB;"></div>
<div style="left:5.3px;top:292.6px;height:20px;line-height:20px;font-size:11.5px;color:#4C3C9E;white-space:pre;letter-spacing:-0.315px;">Elapsed Test Time</div>
<div style="left:124px;top:292.6px;height:20px;line-height:20px;font-size:11.5px;color:#4C3C9E;white-space:pre;width:118px;text-align:right;letter-spacing:-0.359px;">00:00:18.50</div>
<div style="left:3px;top:310px;width:241px;height:1px;background:#C4DCFB;"></div>
<div style="left:5.3px;top:308.6px;height:20px;line-height:20px;font-size:11.5px;color:#4C3C9E;white-space:pre;letter-spacing:-0.219px;">Remaining Test Time</div>
<div style="left:124px;top:308.6px;height:20px;line-height:20px;font-size:11.5px;color:#4C3C9E;white-space:pre;width:118px;text-align:right;letter-spacing:-0.359px;">00:00:56.50</div>
<div style="left:3px;top:326px;width:241px;height:1px;background:#C4DCFB;"></div>
<div style="left:5.3px;top:324.6px;height:20px;line-height:20px;font-size:11.5px;color:#4C3C9E;white-space:pre;letter-spacing:-0.31px;">Control Level (EU)</div>
<div style="left:124px;top:324.6px;height:20px;line-height:20px;font-size:11.5px;color:#4C3C9E;white-space:pre;width:118px;text-align:right;letter-spacing:-0.545px;">1.76</div>
<div style="left:3px;top:342px;width:241px;height:1px;background:#C4DCFB;"></div>
<div style="left:5.3px;top:340.6px;height:20px;line-height:20px;font-size:11.5px;color:#4C3C9E;white-space:pre;letter-spacing:-0.314px;">Repl Avg Error (%)</div>
<div style="left:124px;top:340.6px;height:20px;line-height:20px;font-size:11.5px;color:#4C3C9E;white-space:pre;width:118px;text-align:right;letter-spacing:-0.412px;">0.0035</div>
<div style="left:3px;top:358px;width:241px;height:1px;background:#C4DCFB;"></div>
<div style="left:5.3px;top:356.6px;height:20px;line-height:20px;font-size:11.5px;color:#4C3C9E;white-space:pre;letter-spacing:-0.225px;">Repl Gain Error (dB)</div>
<div style="left:124px;top:356.6px;height:20px;line-height:20px;font-size:11.5px;color:#4C3C9E;white-space:pre;width:118px;text-align:right;letter-spacing:-0.474px;">-0.00031</div>
<div style="left:3px;top:374px;width:241px;height:1px;background:#C4DCFB;"></div>
<div style="left:5.3px;top:372.6px;height:20px;line-height:20px;font-size:11.5px;color:#4C3C9E;white-space:pre;letter-spacing:-0.45px;">Drive Level (V)</div>
<div style="left:124px;top:372.6px;height:20px;line-height:20px;font-size:11.5px;color:#4C3C9E;white-space:pre;width:118px;text-align:right;letter-spacing:-0.47px;">0.27</div>
<div style="left:3px;top:390px;width:241px;height:1px;background:#C4DCFB;"></div>
<div style="left:5.3px;top:388.6px;height:20px;line-height:20px;font-size:11.5px;color:#4C3C9E;white-space:pre;letter-spacing:-0.17px;">Frame Acquisition (%)</div>
<div style="left:126px;top:395px;width:116px;height:7px;background:#A6A6F7;border:1px solid #8C8CE6;"></div>
<div style="left:123px;top:183px;width:1px;height:224px;background:#C4DCFB;"></div>
<div style="left:1px;top:540.5px;width:255.5px;height:19.5px;background:#BACEE8;"></div>
<div style="left:4.2px;top:540.2px;height:20px;line-height:20px;font-size:11.5px;color:#15428B;white-space:pre;letter-spacing:-0.168px;">Channel Status1</div>
<svg style="left:227.0px;top:545.5px;" width="8" height="9" viewBox="0 0 8 9"><path d="M1.8,0.6 H6.2 M2.4,0.6 V4.6 M5.2,0.6 V4.6 M6,0.6 V4.6 M0.5,4.8 H7.5 M4,5 V8.5" fill="none" stroke="#3A5F9E" stroke-width="1.1"/></svg>
<svg style="left:242.5px;top:546.0px;" width="9" height="8" viewBox="0 0 9 8"><path d="M0.8,0.6 L8,7 M8,0.6 L0.8,7" stroke="#3A5F9E" stroke-width="1.5"/></svg>
<div style="left:1px;top:560px;width:255.5px;height:24px;background:linear-gradient(#DDE9FB 0%,#D3E3F9 45%,#C3D9F7 52%,#C0D7F5 85%,#B5CDEE 96%,#A9C0E0 100%);"></div>
<div style="left:0px;top:584px;width:257px;height:183.3px;background:#BFDBFF;border-top:1px solid #7F7F7F;border-left:1px solid #8a8a8a;border-bottom:2px solid #6d6d6d;border-right:1px solid #808080;box-shadow:inset 2px 3px 0 #fff, inset -1px -1px 0 #fff;"></div>
<svg style="left:6px;top:564px;" width="16" height="16" viewBox="0 0 16 16"><rect x="0.3" y="0.3" width="13.7" height="14.2" fill="#8E8E8E"/><rect x="0.3" y="0.3" width="13.7" height="4.8" fill="#fff"/><path d="M14,0.3 V14.6 H0.3" fill="none" stroke="#000" stroke-width="1.3"/><path d="M0.3,14.6 V0.3 H14" fill="none" stroke="#777" stroke-width="0.6"/><path d="M2.3,1.6 H5.6 M3.9,1.6 V5" stroke="#000" stroke-width="1"/><path d="M6.8,2 L6.8,10 L8.7,8.4 L10.3,11.7 L11.6,11.1 L10,7.9 L12.5,7.7 Z" fill="#fff" stroke="#000" stroke-width="0.9"/></svg>
<svg style="left:27px;top:564px;" width="16" height="16" viewBox="0 0 16 16"><path d="M0,2 H15 M0,5 H6 M0,8 H11 M0,11 H8 M0,14.1 H15" stroke="#A39E97" stroke-width="1.8"/></svg>
<div style="left:49px;top:565px;width:1.3px;height:13.5px;background:#6E9FDC;"></div>
<svg style="left:58px;top:563px;" width="18" height="17" viewBox="0 0 18 17"><path d="M1,2.5 H7 M1,6.5 H7 M1,10.5 H7 M1,14.5 H7" stroke="#111" stroke-width="1.1"/><rect x="6.5" y="1.3" width="2.6" height="2.6" fill="#8B8000"/><rect x="6.5" y="5.3" width="2.6" height="2.6" fill="#8B8000"/><rect x="6.5" y="9.3" width="2.6" height="2.6" fill="#8B8000"/><rect x="6.5" y="13.3" width="2.6" height="2.6" fill="#8B8000"/><path d="M9.5,6 H12.3 V15 H9.5 M12.3,10.4 H15.8" fill="none" stroke="#111" stroke-width="1.1"/></svg>
<svg style="left:80.3px;top:570px;" width="6" height="4" viewBox="0 0 6 4"><path d="M0,0 H6 L3,3.6 Z" fill="#567DB9"/></svg>
<svg style="left:93px;top:564px;" width="18" height="16" viewBox="0 0 18 16"><rect x="0" y="1.1" width="8.1" height="2.7" fill="#FF0000"/><rect x="0" y="6.1" width="8.1" height="2.8" fill="#FFFF00"/><rect x="0" y="11.1" width="8.1" height="2.8" fill="#008000"/><path d="M8.6,1.6 H11 V8.4 H8.6 M11,5.4 H14" fill="none" stroke="#111" stroke-width="1.1"/></svg>
<svg style="left:114.8px;top:564px;" width="18" height="16" viewBox="0 0 18 16"><rect x="0" y="1.1" width="8.1" height="2.7" fill="#FF0000"/><rect x="0" y="6.1" width="8.1" height="2.8" fill="#FFFF00"/><rect x="0" y="11.1" width="8.1" height="2.8" fill="#008000"/><path d="M8.4,2.6 H10 M10.5,2.2 L14.6,1.6" fill="none" stroke="#111" stroke-width="1.1"/><path d="M9.4,0.8 L11.2,2.4 L9.4,4" fill="none" stroke="#111" stroke-width="0.9"/></svg>
<svg style="left:137px;top:563px;" width="17" height="18" viewBox="0 0 17 18"><circle cx="8.4" cy="9.6" r="6.3" fill="none" stroke="#A8A39C" stroke-width="1.8"/><path d="M8.4,5 V9.8 L10.8,12 M6.5,1.5 H10.3 M8.4,1.5 V3.3" fill="none" stroke="#A8A39C" stroke-width="1.5"/></svg>
<svg style="left:159.6px;top:570px;" width="6" height="4" viewBox="0 0 6 4"><path d="M0,0 H6 L3,3.6 Z" fill="#8A8F98"/></svg>
<div style="left:3px;top:588.0px;height:20px;line-height:20px;font-size:11.5px;color:#4C3C9E;white-space:pre;width:120px;text-align:center;letter-spacing:-0.2px;">Name</div>
<div style="left:124px;top:588.0px;height:20px;line-height:20px;font-size:11.5px;color:#4C3C9E;white-space:pre;width:120px;text-align:center;letter-spacing:-0.2px;">RMS</div>
<div style="left:3px;top:607px;width:242px;height:17px;background:#fff;border-top:1px solid #6F6F6F;border-right:1px solid #808080;border-bottom:1px solid #9a9a9a;"></div>
<div style="left:123px;top:608px;width:1px;height:16px;background:#C4DCFB;"></div>
<div style="left:5px;top:606.0px;height:20px;line-height:20px;font-size:11.5px;color:#4C3C9E;white-space:pre;letter-spacing:-0.2px;">1:CH 1</div>
<div style="left:124px;top:606.0px;height:20px;line-height:20px;font-size:11.5px;color:#4C3C9E;white-space:pre;width:118px;text-align:right;letter-spacing:-0.2px;">1.76</div>
<div style="left:1px;top:772.5px;width:255.5px;height:19.5px;background:#BACEE8;"></div>
<svg style="left:227.0px;top:777.5px;" width="8" height="9" viewBox="0 0 8 9"><path d="M1.8,0.6 H6.2 M2.4,0.6 V4.6 M5.2,0.6 V4.6 M6,0.6 V4.6 M0.5,4.8 H7.5 M4,5 V8.5" fill="none" stroke="#3A5F9E" stroke-width="1.1"/></svg>
<svg style="left:242.5px;top:778.0px;" width="9" height="8" viewBox="0 0 9 8"><path d="M0.8,0.6 L8,7 M8,0.6 L0.8,7" stroke="#3A5F9E" stroke-width="1.5"/></svg>
<div style="left:0px;top:792px;width:257px;height:215px;background:#fff;border-left:1px solid #DADADA;border-right:1px solid #8a8a8a;"></div>
<div style="left:2px;top:793.7px;width:253.6px;height:212.8px;background:#FE0000;border-right:1px solid #8a8a8a;border-bottom:1px solid #8a8a8a;"></div>
<div style="left:0.5px;top:890.3px;height:20px;line-height:20px;font-size:22px;color:#ECECEC;white-space:pre;width:255px;text-align:center;font-weight:bold;height:30px;line-height:30px;top:886px;">ABORT</div>
<div style="left:261px;top:138px;width:1181px;height:870px;background:#fff;"></div>
<div style="left:261px;top:138px;width:1180px;height:2px;background:#868686;"></div>
<div style="left:261px;top:138px;width:2px;height:869px;background:#868686;"></div>
<div style="left:263px;top:140px;width:1px;height:866px;background:#E8E8E8;"></div>
<div style="left:266px;top:143px;width:1171px;height:838px;background:#BFDBFF;"></div>
<div style="left:266px;top:143px;width:1171px;height:419px;border:1px solid #555;"></div>
<div style="left:1439px;top:140px;width:1px;height:866px;background:#B8CFEE;"></div>
<div style="left:263px;top:982.5px;width:1178px;height:23.3px;background:linear-gradient(#E3EEFC 0%,#D2E3FA 35%,#BAD4F7 70%,#B0CDF5 100%);"></div>
<svg style="left:280px;top:981px;" width="75" height="24" viewBox="0 0 75 24"><path d="M0,1 H70 V20 Q70,22 68,22 H27 Q24,22 22,20 L3,1 Z" fill="#fff"/><path d="M3,1.2 L22,20 Q24,22 27,22 H68 Q70,22 70,20 V1" fill="none" stroke="#A5C1E8" stroke-width="0.8"/></svg>
<div style="left:307.5px;top:984.0px;height:20px;line-height:20px;font-size:11.5px;color:#1B1B70;white-space:pre;letter-spacing:-0.574px;">Page 1</div>
<div style="left:353.5px;top:984.5px;width:18px;height:18px;border:1px solid #C8C8C8;border-radius:3px;background:#FBFBFB;box-shadow:0 0 0 1px #E6E6E6;"></div>
<svg style="left:358px;top:989px;" width="9" height="9" viewBox="0 0 9 9"><path d="M1.5,4.5 H7.5 M4.5,1.5 V7.5" stroke="#000" stroke-width="1.2"/></svg>
<svg style="left:268px;top:989px;" width="8" height="11" viewBox="0 0 8 11"><path d="M6,1 L1.5,5.5 L6,10 Z" fill="none" stroke="#4C6FAE" stroke-width="1"/></svg>
<svg style="left:1421px;top:989px;" width="8" height="11" viewBox="0 0 8 11"><path d="M2,1 L6.5,5.5 L2,10 Z" fill="none" stroke="#4C6FAE" stroke-width="1"/></svg>
<div style="left:353px;top:205px;width:1075px;height:296px;background:#fff;"></div>
<svg style="left:0px;top:0px;pointer-events:none;" width="1916" height="1026" viewBox="0 0 1916 1026"><path d="M353,234.5 H1428" stroke="#B3D2F9" stroke-width="1" stroke-dasharray="3,3"/><path d="M353,264.5 H1428" stroke="#B3D2F9" stroke-width="1" stroke-dasharray="3,3"/><path d="M353,294.5 H1428" stroke="#B3D2F9" stroke-width="1" stroke-dasharray="3,3"/><path d="M353,323.5 H1428" stroke="#B3D2F9" stroke-width="1" stroke-dasharray="3,3"/><path d="M353,353.5 H1428" stroke="#B3D2F9" stroke-width="1" stroke-dasharray="3,3"/><path d="M353,382.5 H1428" stroke="#B3D2F9" stroke-width="1" stroke-dasharray="3,3"/><path d="M353,412.5 H1428" stroke="#B3D2F9" stroke-width="1" stroke-dasharray="3,3"/><path d="M353,441.5 H1428" stroke="#B3D2F9" stroke-width="1" stroke-dasharray="3,3"/><path d="M353,471.5 H1428" stroke="#B3D2F9" stroke-width="1" stroke-dasharray="3,3"/><path d="M406.5,205 V501" stroke="#B3D2F9" stroke-width="1" stroke-dasharray="3,3"/><path d="M460.5,205 V501" stroke="#B3D2F9" stroke-width="1" stroke-dasharray="3,3"/><path d="M513.5,205 V501" stroke="#B3D2F9" stroke-width="1" stroke-dasharray="3,3"/><path d="M567.5,205 V501" stroke="#B3D2F9" stroke-width="1" stroke-dasharray="3,3"/><path d="M621.5,205 V501" stroke="#B3D2F9" stroke-width="1" stroke-dasharray="3,3"/><path d="M675.5,205 V501" stroke="#B3D2F9" stroke-width="1" stroke-dasharray="3,3"/><path d="M729.5,205 V501" stroke="#B3D2F9" stroke-width="1" stroke-dasharray="3,3"/><path d="M782.5,205 V501" stroke="#B3D2F9" stroke-width="1" stroke-dasharray="3,3"/><path d="M836.5,205 V501" stroke="#B3D2F9" stroke-width="1" stroke-dasharray="3,3"/><path d="M890.5,205 V501" stroke="#B3D2F9" stroke-width="1" stroke-dasharray="3,3"/><path d="M944.5,205 V501" stroke="#B3D2F9" stroke-width="1" stroke-dasharray="3,3"/><path d="M998.5,205 V501" stroke="#B3D2F9" stroke-width="1" stroke-dasharray="3,3"/><path d="M1052.5,205 V501" stroke="#B3D2F9" stroke-width="1" stroke-dasharray="3,3"/><path d="M1105.5,205 V501" stroke="#B3D2F9" stroke-width="1" stroke-dasharray="3,3"/><path d="M1159.5,205 V501" stroke="#B3D2F9" stroke-width="1" stroke-dasharray="3,3"/><path d="M1213.5,205 V501" stroke="#B3D2F9" stroke-width="1" stroke-dasharray="3,3"/><path d="M1267.5,205 V501" stroke="#B3D2F9" stroke-width="1" stroke-dasharray="3,3"/><path d="M1321.5,205 V501" stroke="#B3D2F9" stroke-width="1" stroke-dasharray="3,3"/><path d="M1374.5,205 V501" stroke="#B3D2F9" stroke-width="1" stroke-dasharray="3,3"/><path d="M344,204.5 H351" stroke="#503C9C" stroke-width="1"/><path d="M344,234.5 H351" stroke="#503C9C" stroke-width="1"/><path d="M344,264.5 H351" stroke="#503C9C" stroke-width="1"/><path d="M344,294.5 H351" stroke="#503C9C" stroke-width="1"/><path d="M344,323.5 H351" stroke="#503C9C" stroke-width="1"/><path d="M344,353.5 H351" stroke="#503C9C" stroke-width="1"/><path d="M344,382.5 H351" stroke="#503C9C" stroke-width="1"/><path d="M344,412.5 H351" stroke="#503C9C" stroke-width="1"/><path d="M344,441.5 H351" stroke="#503C9C" stroke-width="1"/><path d="M344,471.5 H351" stroke="#503C9C" stroke-width="1"/><path d="M344,501.5 H351" stroke="#503C9C" stroke-width="1"/><path d="M352.5,503 V510" stroke="#503C9C" stroke-width="1"/><path d="M379.5,503 V506" stroke="#503C9C" stroke-width="1"/><path d="M406.5,503 V510" stroke="#503C9C" stroke-width="1"/><path d="M433.5,503 V506" stroke="#503C9C" stroke-width="1"/><path d="M460.5,503 V510" stroke="#503C9C" stroke-width="1"/><path d="M487.5,503 V506" stroke="#503C9C" stroke-width="1"/><path d="M513.5,503 V510" stroke="#503C9C" stroke-width="1"/><path d="M540.5,503 V506" stroke="#503C9C" stroke-width="1"/><path d="M567.5,503 V510" stroke="#503C9C" stroke-width="1"/><path d="M594.5,503 V506" stroke="#503C9C" stroke-width="1"/><path d="M621.5,503 V510" stroke="#503C9C" stroke-width="1"/><path d="M648.5,503 V506" stroke="#503C9C" stroke-width="1"/><path d="M675.5,503 V510" stroke="#503C9C" stroke-width="1"/><path d="M702.5,503 V506" stroke="#503C9C" stroke-width="1"/><path d="M729.5,503 V510" stroke="#503C9C" stroke-width="1"/><path d="M756.5,503 V506" stroke="#503C9C" stroke-width="1"/><path d="M782.5,503 V510" stroke="#503C9C" stroke-width="1"/><path d="M809.5,503 V506" stroke="#503C9C" stroke-width="1"/><path d="M836.5,503 V510" stroke="#503C9C" stroke-width="1"/><path d="M863.5,503 V506" stroke="#503C9C" stroke-width="1"/><path d="M890.5,503 V510" stroke="#503C9C" stroke-width="1"/><path d="M917.5,503 V506" stroke="#503C9C" stroke-width="1"/><path d="M944.5,503 V510" stroke="#503C9C" stroke-width="1"/><path d="M971.5,503 V506" stroke="#503C9C" stroke-width="1"/><path d="M998.5,503 V510" stroke="#503C9C" stroke-width="1"/><path d="M1025.5,503 V506" stroke="#503C9C" stroke-width="1"/><path d="M1052.5,503 V510" stroke="#503C9C" stroke-width="1"/><path d="M1078.5,503 V506" stroke="#503C9C" stroke-width="1"/><path d="M1105.5,503 V510" stroke="#503C9C" stroke-width="1"/><path d="M1132.5,503 V506" stroke="#503C9C" stroke-width="1"/><path d="M1159.5,503 V510" stroke="#503C9C" stroke-width="1"/><path d="M1186.5,503 V506" stroke="#503C9C" stroke-width="1"/><path d="M1213.5,503 V510" stroke="#503C9C" stroke-width="1"/><path d="M1240.5,503 V506" stroke="#503C9C" stroke-width="1"/><path d="M1267.5,503 V510" stroke="#503C9C" stroke-width="1"/><path d="M1294.5,503 V506" stroke="#503C9C" stroke-width="1"/><path d="M1321.5,503 V510" stroke="#503C9C" stroke-width="1"/><path d="M1347.5,503 V506" stroke="#503C9C" stroke-width="1"/><path d="M1374.5,503 V510" stroke="#503C9C" stroke-width="1"/><path d="M1401.5,503 V506" stroke="#503C9C" stroke-width="1"/><path d="M1428.5,503 V510" stroke="#503C9C" stroke-width="1"/><polyline points="353.0,342.9 354.0,346.8 355.0,351.0 356.0,355.3 357.0,359.5 358.0,363.3 359.0,366.5 360.0,368.8 361.0,370.3 362.0,370.7 363.0,370.1 364.0,368.5 365.0,365.9 366.0,362.7 367.0,358.8 368.0,354.6 369.0,350.2 370.0,346.0 371.0,342.2 372.0,339.0 373.0,336.5 374.0,335.0 375.0,334.5 376.0,335.0 377.0,336.5 378.0,339.0 379.0,342.2 380.0,346.0 381.0,350.2 382.0,354.6 383.0,358.8 384.0,362.7 385.0,365.9 386.0,368.5 387.0,370.1 388.0,370.7 389.0,370.3 390.0,368.8 391.0,366.5 392.0,363.3 393.0,359.5 394.0,355.3 395.0,351.0 396.0,346.8 397.0,342.9 398.0,339.5 399.0,336.9 400.0,335.2 401.0,334.5 402.0,334.8 403.0,336.2 404.0,338.5 405.0,341.6 406.0,345.3 407.0,349.5 408.0,353.8 409.0,358.1 410.0,362.0 411.0,365.4 412.0,368.1 413.0,369.9 414.0,370.7 415.0,370.4 416.0,369.2 417.0,367.0 418.0,363.9 419.0,360.2 420.0,356.1 421.0,351.8 422.0,347.5 423.0,343.5 424.0,340.1 425.0,337.3 426.0,335.5 427.0,334.6 428.0,334.7 429.0,335.9 430.0,338.0 431.0,341.0 432.0,344.6 433.0,348.7 434.0,353.0 435.0,357.3 436.0,361.3 437.0,364.8 438.0,367.7 439.0,369.6 440.0,370.6 441.0,370.5 442.0,369.5 443.0,367.4 444.0,364.5 445.0,360.9 446.0,356.9 447.0,352.6 448.0,348.3 449.0,344.2 450.0,340.6 451.0,337.8 452.0,335.7 453.0,334.7 454.0,334.6 455.0,335.6 456.0,337.6 457.0,340.4 458.0,343.9 459.0,347.9 460.0,352.2 461.0,356.5 462.0,360.6 463.0,364.3 464.0,367.2 465.0,369.3 466.0,370.5 467.0,370.6 468.0,369.7 469.0,367.8 470.0,365.1 471.0,361.6 472.0,357.6 473.0,353.4 474.0,349.0 475.0,344.9 476.0,341.2 477.0,338.2 478.0,336.0 479.0,334.8 480.0,334.5 481.0,335.3 482.0,337.1 483.0,339.8 484.0,343.2 485.0,347.2 486.0,351.4 487.0,355.8 488.0,359.9 489.0,363.6 490.0,366.7 491.0,369.0 492.0,370.4 493.0,370.7 494.0,370.0 495.0,368.3 496.0,365.6 497.0,362.3 498.0,358.4 499.0,354.1 500.0,349.8 501.0,345.6 502.0,341.9 503.0,338.7 504.0,336.3 505.0,334.9 506.0,334.5 507.0,335.1 508.0,336.8 509.0,339.3 510.0,342.6 511.0,346.4 512.0,350.7 513.0,355.0 514.0,359.2 515.0,363.0 516.0,366.2 517.0,368.7 518.0,370.2 519.0,370.7 520.0,370.2 521.0,368.6 522.0,366.2 523.0,362.9 524.0,359.1 525.0,354.9 526.0,350.6 527.0,346.4 528.0,342.5 529.0,339.2 530.0,336.7 531.0,335.1 532.0,334.5 533.0,334.9 534.0,336.4 535.0,338.8 536.0,341.9 537.0,345.7 538.0,349.9 539.0,354.2 540.0,358.5 541.0,362.4 542.0,365.7 543.0,368.3 544.0,370.0 545.0,370.7 546.0,370.3 547.0,369.0 548.0,366.7 549.0,363.6 550.0,359.8 551.0,355.7 552.0,351.4 553.0,347.1 554.0,343.2 555.0,339.8 556.0,337.1 557.0,335.3 558.0,334.5 559.0,334.8 560.0,336.1 561.0,338.3 562.0,341.3 563.0,345.0 564.0,349.1 565.0,353.4 566.0,357.7 567.0,361.7 568.0,365.2 569.0,367.9 570.0,369.8 571.0,370.6 572.0,370.5 573.0,369.3 574.0,367.2 575.0,364.2 576.0,360.6 577.0,356.5 578.0,352.1 579.0,347.9 580.0,343.8 581.0,340.3 582.0,337.5 583.0,335.6 584.0,334.6 585.0,334.7 586.0,335.8 587.0,337.8 588.0,340.7 589.0,344.3 590.0,348.4 591.0,352.7 592.0,357.0 593.0,361.0 594.0,364.6 595.0,367.5 596.0,369.5 597.0,370.6 598.0,370.6 599.0,369.6 600.0,367.6 601.0,364.8 602.0,361.2 603.0,357.2 604.0,352.9 605.0,348.6 606.0,344.5 607.0,340.9 608.0,338.0 609.0,335.9 610.0,334.7 611.0,334.6 612.0,335.5 613.0,337.4 614.0,340.1 615.0,343.6 616.0,347.6 617.0,351.9 618.0,356.2 619.0,360.3 620.0,364.0 621.0,367.0 622.0,369.2 623.0,370.4 624.0,370.7 625.0,369.8 626.0,368.0 627.0,365.3 628.0,361.9 629.0,358.0 630.0,353.7 631.0,349.4 632.0,345.2 633.0,341.5 634.0,338.4 635.0,336.2 636.0,334.8 637.0,334.5 638.0,335.2 639.0,337.0 640.0,339.6 641.0,342.9 642.0,346.9 643.0,351.1 644.0,355.4 645.0,359.6 646.0,363.4 647.0,366.5 648.0,368.9 649.0,370.3 650.0,370.7 651.0,370.1 652.0,368.4 653.0,365.9 654.0,362.6 655.0,358.7 656.0,354.5 657.0,350.2 658.0,346.0 659.0,342.1 660.0,338.9 661.0,336.5 662.0,335.0 663.0,334.5 664.0,335.0 665.0,336.6 666.0,339.1 667.0,342.3 668.0,346.1 669.0,350.3 670.0,354.7 671.0,358.9 672.0,362.7 673.0,366.0 674.0,368.5 675.0,370.1 676.0,370.7 677.0,370.3 678.0,368.8 679.0,366.4 680.0,363.2 681.0,359.4 682.0,355.3 683.0,350.9 684.0,346.7 685.0,342.8 686.0,339.5 687.0,336.9 688.0,335.2 689.0,334.5 690.0,334.9 691.0,336.2 692.0,338.5 693.0,341.7 694.0,345.4 695.0,349.6 696.0,353.9 697.0,358.1 698.0,362.1 699.0,365.5 700.0,368.1 701.0,369.9 702.0,370.7 703.0,370.4 704.0,369.1 705.0,366.9 706.0,363.9 707.0,360.2 708.0,356.0 709.0,351.7 710.0,347.4 711.0,343.5 712.0,340.0 713.0,337.3 714.0,335.4 715.0,334.6 716.0,334.7 717.0,335.9 718.0,338.1 719.0,341.0 720.0,344.7 721.0,348.8 722.0,353.1 723.0,357.4 724.0,361.4 725.0,364.9 726.0,367.7 727.0,369.6 728.0,370.6 729.0,370.5 730.0,369.4 731.0,367.4 732.0,364.5 733.0,360.9 734.0,356.8 735.0,352.5 736.0,348.2 737.0,344.1 738.0,340.6 739.0,337.7 740.0,335.7 741.0,334.6 742.0,334.6 743.0,335.6 744.0,337.6 745.0,340.5 746.0,344.0 747.0,348.0 748.0,352.3 749.0,356.6 750.0,360.7 751.0,364.3 752.0,367.3 753.0,369.4 754.0,370.5 755.0,370.6 756.0,369.7 757.0,367.8 758.0,365.0 759.0,361.5 760.0,357.6 761.0,353.3 762.0,349.0 763.0,344.8 764.0,341.2 765.0,338.2 766.0,336.0 767.0,334.8 768.0,334.5 769.0,335.4 770.0,337.2 771.0,339.9 772.0,343.3 773.0,347.3 774.0,351.5 775.0,355.9 776.0,360.0 777.0,363.7 778.0,366.8 779.0,369.1 780.0,370.4 781.0,370.7 782.0,369.9 783.0,368.2 784.0,365.6 785.0,362.2 786.0,358.3 787.0,354.1 788.0,349.7 789.0,345.6 790.0,341.8 791.0,338.7 792.0,336.3 793.0,334.9 794.0,334.5 795.0,335.2 796.0,336.8 797.0,339.3 798.0,342.7 799.0,346.5 800.0,350.8 801.0,355.1 802.0,359.3 803.0,363.1 804.0,366.3 805.0,368.7 806.0,370.2 807.0,370.7 808.0,370.1 809.0,368.6 810.0,366.1 811.0,362.9 812.0,359.0 813.0,354.8 814.0,350.5 815.0,346.3 816.0,342.4 817.0,339.2 818.0,336.7 819.0,335.1 820.0,334.5 821.0,335.0 822.0,336.4 823.0,338.8 824.0,342.0 825.0,345.8 826.0,350.0 827.0,354.3 828.0,358.5 829.0,362.4 830.0,365.8 831.0,368.3 832.0,370.0 833.0,370.7 834.0,370.3 835.0,368.9 836.0,366.6 837.0,363.5 838.0,359.8 839.0,355.6 840.0,351.3 841.0,347.0 842.0,343.1 843.0,339.7 844.0,337.1 845.0,335.3 846.0,334.5 847.0,334.8 848.0,336.1 849.0,338.3 850.0,341.4 851.0,345.1 852.0,349.2 853.0,353.5 854.0,357.8 855.0,361.8 856.0,365.2 857.0,367.9 858.0,369.8 859.0,370.6 860.0,370.5 861.0,369.3 862.0,367.1 863.0,364.1 864.0,360.5 865.0,356.4 866.0,352.1 867.0,347.8 868.0,343.8 869.0,340.3 870.0,337.5 871.0,335.5 872.0,334.6 873.0,334.7 874.0,335.8 875.0,337.9 876.0,340.8 877.0,344.4 878.0,348.4 879.0,352.8 880.0,357.0 881.0,361.1 882.0,364.6 883.0,367.5 884.0,369.5 885.0,370.6 886.0,370.6 887.0,369.6 888.0,367.6 889.0,364.7 890.0,361.2 891.0,357.1 892.0,352.8 893.0,348.5 894.0,344.5 895.0,340.8 896.0,337.9 897.0,335.8 898.0,334.7 899.0,334.6 900.0,335.5 901.0,337.4 902.0,340.2 903.0,343.7 904.0,347.7 905.0,352.0 906.0,356.3 907.0,360.4 908.0,364.1 909.0,367.1 910.0,369.2 911.0,370.5 912.0,370.6 913.0,369.8 914.0,368.0 915.0,365.3 916.0,361.8 917.0,357.9 918.0,353.6 919.0,349.3 920.0,345.2 921.0,341.5 922.0,338.4 923.0,336.1 924.0,334.8 925.0,334.5 926.0,335.3 927.0,337.0 928.0,339.6 929.0,343.0 930.0,346.9 931.0,351.2 932.0,355.5 933.0,359.7 934.0,363.4 935.0,366.6 936.0,368.9 937.0,370.3 938.0,370.7 939.0,370.0 940.0,368.4 941.0,365.8 942.0,362.5 943.0,358.6 944.0,354.4 945.0,350.1 946.0,345.9 947.0,342.1 948.0,338.9 949.0,336.5 950.0,335.0 951.0,334.5 952.0,335.1 953.0,336.6 954.0,339.1 955.0,342.4 956.0,346.2 957.0,350.4 958.0,354.7 959.0,359.0 960.0,362.8 961.0,366.1 962.0,368.6 963.0,370.1 964.0,370.7 965.0,370.2 966.0,368.8 967.0,366.3 968.0,363.2 969.0,359.4 970.0,355.2 971.0,350.8 972.0,346.6 973.0,342.7 974.0,339.4 975.0,336.8 976.0,335.2 977.0,334.5 978.0,334.9 979.0,336.3 980.0,338.6 981.0,341.7 982.0,345.5 983.0,349.6 984.0,354.0 985.0,358.2 986.0,362.1 987.0,365.5 988.0,368.2 989.0,369.9 990.0,370.7 991.0,370.4 992.0,369.1 993.0,366.8 994.0,363.8 995.0,360.1 996.0,355.9 997.0,351.6 998.0,347.4 999.0,343.4 1000.0,339.9 1001.0,337.2 1002.0,335.4 1003.0,334.6 1004.0,334.7 1005.0,336.0 1006.0,338.1 1007.0,341.1 1008.0,344.8 1009.0,348.9 1010.0,353.2 1011.0,357.5 1012.0,361.5 1013.0,365.0 1014.0,367.8 1015.0,369.7 1016.0,370.6 1017.0,370.5 1018.0,369.4 1019.0,367.3 1020.0,364.4 1021.0,360.8 1022.0,356.7 1023.0,352.4 1024.0,348.1 1025.0,344.1 1026.0,340.5 1027.0,337.7 1028.0,335.7 1029.0,334.6 1030.0,334.6 1031.0,335.7 1032.0,337.7 1033.0,340.5 1034.0,344.1 1035.0,348.1 1036.0,352.4 1037.0,356.7 1038.0,360.8 1039.0,364.4 1040.0,367.3 1041.0,369.4 1042.0,370.5 1043.0,370.6 1044.0,369.7 1045.0,367.8 1046.0,365.0 1047.0,361.5 1048.0,357.5 1049.0,353.2 1050.0,348.9 1051.0,344.8 1052.0,341.1 1053.0,338.1 1054.0,336.0 1055.0,334.7 1056.0,334.6 1057.0,335.4 1058.0,337.2 1059.0,339.9 1060.0,343.4 1061.0,347.4 1062.0,351.6 1063.0,355.9 1064.0,360.1 1065.0,363.8 1066.0,366.8 1067.0,369.1 1068.0,370.4 1069.0,370.7 1070.0,369.9 1071.0,368.2 1072.0,365.5 1073.0,362.1 1074.0,358.2 1075.0,354.0 1076.0,349.6 1077.0,345.5 1078.0,341.7 1079.0,338.6 1080.0,336.3 1081.0,334.9 1082.0,334.5 1083.0,335.2 1084.0,336.8 1085.0,339.4 1086.0,342.7 1087.0,346.6 1088.0,350.8 1089.0,355.2 1090.0,359.4 1091.0,363.2 1092.0,366.3 1093.0,368.8 1094.0,370.2 1095.0,370.7 1096.0,370.1 1097.0,368.6 1098.0,366.1 1099.0,362.8 1100.0,359.0 1101.0,354.7 1102.0,350.4 1103.0,346.2 1104.0,342.4 1105.0,339.1 1106.0,336.6 1107.0,335.1 1108.0,334.5 1109.0,335.0 1110.0,336.5 1111.0,338.9 1112.0,342.1 1113.0,345.9 1114.0,350.1 1115.0,354.4 1116.0,358.6 1117.0,362.5 1118.0,365.8 1119.0,368.4 1120.0,370.0 1121.0,370.7 1122.0,370.3 1123.0,368.9 1124.0,366.6 1125.0,363.4 1126.0,359.7 1127.0,355.5 1128.0,351.2 1129.0,346.9 1130.0,343.0 1131.0,339.6 1132.0,337.0 1133.0,335.3 1134.0,334.5 1135.0,334.8 1136.0,336.1 1137.0,338.4 1138.0,341.5 1139.0,345.2 1140.0,349.3 1141.0,353.6 1142.0,357.9 1143.0,361.8 1144.0,365.3 1145.0,368.0 1146.0,369.8 1147.0,370.6 1148.0,370.5 1149.0,369.2 1150.0,367.1 1151.0,364.1 1152.0,360.4 1153.0,356.3 1154.0,352.0 1155.0,347.7 1156.0,343.7 1157.0,340.2 1158.0,337.4 1159.0,335.5 1160.0,334.6 1161.0,334.7 1162.0,335.8 1163.0,337.9 1164.0,340.8 1165.0,344.5 1166.0,348.5 1167.0,352.8 1168.0,357.1 1169.0,361.2 1170.0,364.7 1171.0,367.6 1172.0,369.6 1173.0,370.6 1174.0,370.6 1175.0,369.5 1176.0,367.5 1177.0,364.6 1178.0,361.1 1179.0,357.0 1180.0,352.8 1181.0,348.4 1182.0,344.4 1183.0,340.8 1184.0,337.9 1185.0,335.8 1186.0,334.7 1187.0,334.6 1188.0,335.5 1189.0,337.5 1190.0,340.3 1191.0,343.8 1192.0,347.8 1193.0,352.1 1194.0,356.4 1195.0,360.5 1196.0,364.1 1197.0,367.1 1198.0,369.3 1199.0,370.5 1200.0,370.6 1201.0,369.8 1202.0,367.9 1203.0,365.2 1204.0,361.8 1205.0,357.8 1206.0,353.5 1207.0,349.2 1208.0,345.1 1209.0,341.4 1210.0,338.3 1211.0,336.1 1212.0,334.8 1213.0,334.5 1214.0,335.3 1215.0,337.1 1216.0,339.7 1217.0,343.1 1218.0,347.0 1219.0,351.3 1220.0,355.6 1221.0,359.8 1222.0,363.5 1223.0,366.6 1224.0,368.9 1225.0,370.3 1226.0,370.7 1227.0,370.0 1228.0,368.3 1229.0,365.8 1230.0,362.4 1231.0,358.5 1232.0,354.3 1233.0,350.0 1234.0,345.8 1235.0,342.0 1236.0,338.8 1237.0,336.4 1238.0,335.0 1239.0,334.5 1240.0,335.1 1241.0,336.7 1242.0,339.2 1243.0,342.4 1244.0,346.3 1245.0,350.5 1246.0,354.8 1247.0,359.0 1248.0,362.9 1249.0,366.1 1250.0,368.6 1251.0,370.1 1252.0,370.7 1253.0,370.2 1254.0,368.7 1255.0,366.3 1256.0,363.1 1257.0,359.3 1258.0,355.1 1259.0,350.8 1260.0,346.5 1261.0,342.7 1262.0,339.3 1263.0,336.8 1264.0,335.2 1265.0,334.5 1266.0,334.9 1267.0,336.3 1268.0,338.7 1269.0,341.8 1270.0,345.6 1271.0,349.7 1272.0,354.1 1273.0,358.3 1274.0,362.2 1275.0,365.6 1276.0,368.2 1277.0,369.9 1278.0,370.7 1279.0,370.4 1280.0,369.1 1281.0,366.8 1282.0,363.7 1283.0,360.0 1284.0,355.9 1285.0,351.5 1286.0,347.3 1287.0,343.3 1288.0,339.9 1289.0,337.2 1290.0,335.4 1291.0,334.5 1292.0,334.8 1293.0,336.0 1294.0,338.2 1295.0,341.2 1296.0,344.8 1297.0,349.0 1298.0,353.3 1299.0,357.6 1300.0,361.5 1301.0,365.0 1302.0,367.8 1303.0,369.7 1304.0,370.6 1305.0,370.5 1306.0,369.4 1307.0,367.3 1308.0,364.3 1309.0,360.7 1310.0,356.6 1311.0,352.3 1312.0,348.0 1313.0,344.0 1314.0,340.5 1315.0,337.6 1316.0,335.6 1317.0,334.6 1318.0,334.6 1319.0,335.7 1320.0,337.7 1321.0,340.6 1322.0,344.1 1323.0,348.2 1324.0,352.5 1325.0,356.8 1326.0,360.9 1327.0,364.5 1328.0,367.4 1329.0,369.4 1330.0,370.5 1331.0,370.6 1332.0,369.6 1333.0,367.7 1334.0,364.9 1335.0,361.4 1336.0,357.4 1337.0,353.1 1338.0,348.8 1339.0,344.7 1340.0,341.0 1341.0,338.1 1342.0,335.9 1343.0,334.7 1344.0,334.6 1345.0,335.4 1346.0,337.3 1347.0,340.0 1348.0,343.5 1349.0,347.4 1350.0,351.7 1351.0,356.0 1352.0,360.2 1353.0,363.9 1354.0,366.9 1355.0,369.1 1356.0,370.4 1357.0,370.7 1358.0,369.9 1359.0,368.1 1360.0,365.5 1361.0,362.1 1362.0,358.1 1363.0,353.9 1364.0,349.6 1365.0,345.4 1366.0,341.7 1367.0,338.5 1368.0,336.2 1369.0,334.9 1370.0,334.5 1371.0,335.2 1372.0,336.9 1373.0,339.5 1374.0,342.8 1375.0,346.7 1376.0,350.9 1377.0,355.3 1378.0,359.4 1379.0,363.2 1380.0,366.4 1381.0,368.8 1382.0,370.3 1383.0,370.7 1384.0,370.1 1385.0,368.5 1386.0,366.0 1387.0,362.7 1388.0,358.9 1389.0,354.7 1390.0,350.3 1391.0,346.1 1392.0,342.3 1393.0,339.1 1394.0,336.6 1395.0,335.0 1396.0,334.5 1397.0,335.0 1398.0,336.5 1399.0,338.9 1400.0,342.1 1401.0,346.0 1402.0,350.2 1403.0,354.5 1404.0,358.7 1405.0,362.6 1406.0,365.9 1407.0,368.4 1408.0,370.1 1409.0,370.7 1410.0,370.3 1411.0,368.9 1412.0,366.5 1413.0,363.4 1414.0,359.6 1415.0,355.4 1416.0,351.1 1417.0,346.9 1418.0,342.9 1419.0,339.6 1420.0,337.0 1421.0,335.2 1422.0,334.5 1423.0,334.8 1424.0,336.2 1425.0,338.4 1426.0,341.5 1427.0,345.2 1428.0,349.4" fill="none" stroke="#482E96" stroke-width="1" shape-rendering="crispEdges"/><polyline points="353.0,338.9 354.0,342.1 355.0,346.0 356.0,350.2 357.0,354.5 358.0,358.7 359.0,362.6 360.0,365.9 361.0,368.4 362.0,370.1 363.0,370.7 364.0,370.3 365.0,368.9 366.0,366.5 367.0,363.4 368.0,359.6 369.0,355.4 370.0,351.1 371.0,346.9 372.0,342.9 373.0,339.6 374.0,337.0 375.0,335.2 376.0,334.5 377.0,334.8 378.0,336.2 379.0,338.4 380.0,341.5 381.0,345.2 382.0,349.4 383.0,353.7 384.0,358.0 385.0,361.9 386.0,365.3 387.0,368.0 388.0,369.8 389.0,370.7 390.0,370.4 391.0,369.2 392.0,367.0 393.0,364.0 394.0,360.3 395.0,356.2 396.0,351.9 397.0,347.6 398.0,343.6 399.0,340.1 400.0,337.4 401.0,335.5 402.0,334.6 403.0,334.7 404.0,335.9 405.0,338.0 406.0,340.9 407.0,344.5 408.0,348.6 409.0,352.9 410.0,357.2 411.0,361.2 412.0,364.8 413.0,367.6 414.0,369.6 415.0,370.6 416.0,370.6 417.0,369.5 418.0,367.5 419.0,364.6 420.0,361.0 421.0,357.0 422.0,352.7 423.0,348.4 424.0,344.3 425.0,340.7 426.0,337.8 427.0,335.8 428.0,334.7 429.0,334.6 430.0,335.6 431.0,337.5 432.0,340.3 433.0,343.8 434.0,347.9 435.0,352.1 436.0,356.5 437.0,360.6 438.0,364.2 439.0,367.2 440.0,369.3 441.0,370.5 442.0,370.6 443.0,369.8 444.0,367.9 445.0,365.2 446.0,361.7 447.0,357.7 448.0,353.4 449.0,349.1 450.0,345.0 451.0,341.3 452.0,338.3 453.0,336.1 454.0,334.8 455.0,334.5 456.0,335.3 457.0,337.1 458.0,339.8 459.0,343.2 460.0,347.1 461.0,351.4 462.0,355.7 463.0,359.8 464.0,363.6 465.0,366.7 466.0,369.0 467.0,370.3 468.0,370.7 469.0,370.0 470.0,368.3 471.0,365.7 472.0,362.4 473.0,358.5 474.0,354.2 475.0,349.9 476.0,345.7 477.0,341.9 478.0,338.8 479.0,336.4 480.0,334.9 481.0,334.5 482.0,335.1 483.0,336.7 484.0,339.2 485.0,342.5 486.0,346.4 487.0,350.6 488.0,354.9 489.0,359.1 490.0,362.9 491.0,366.2 492.0,368.6 493.0,370.2 494.0,370.7 495.0,370.2 496.0,368.7 497.0,366.2 498.0,363.0 499.0,359.2 500.0,355.0 501.0,350.7 502.0,346.4 503.0,342.6 504.0,339.3 505.0,336.8 506.0,335.1 507.0,334.5 508.0,334.9 509.0,336.3 510.0,338.7 511.0,341.9 512.0,345.6 513.0,349.8 514.0,354.1 515.0,358.4 516.0,362.3 517.0,365.6 518.0,368.3 519.0,370.0 520.0,370.7 521.0,370.4 522.0,369.0 523.0,366.7 524.0,363.6 525.0,359.9 526.0,355.8 527.0,351.4 528.0,347.2 529.0,343.2 530.0,339.8 531.0,337.1 532.0,335.3 533.0,334.5 534.0,334.8 535.0,336.0 536.0,338.2 537.0,341.2 538.0,344.9 539.0,349.0 540.0,353.4 541.0,357.6 542.0,361.6 543.0,365.1 544.0,367.8 545.0,369.7 546.0,370.6 547.0,370.5 548.0,369.3 549.0,367.2 550.0,364.3 551.0,360.6 552.0,356.5 553.0,352.2 554.0,347.9 555.0,343.9 556.0,340.4 557.0,337.6 558.0,335.6 559.0,334.6 560.0,334.7 561.0,335.7 562.0,337.8 563.0,340.6 564.0,344.2 565.0,348.3 566.0,352.6 567.0,356.9 568.0,360.9 569.0,364.5 570.0,367.4 571.0,369.5 572.0,370.5 573.0,370.6 574.0,369.6 575.0,367.7 576.0,364.8 577.0,361.3 578.0,357.3 579.0,353.0 580.0,348.7 581.0,344.6 582.0,341.0 583.0,338.0 584.0,335.9 585.0,334.7 586.0,334.6 587.0,335.5 588.0,337.3 589.0,340.1 590.0,343.5 591.0,347.5 592.0,351.8 593.0,356.1 594.0,360.2 595.0,363.9 596.0,367.0 597.0,369.2 598.0,370.4 599.0,370.7 600.0,369.9 601.0,368.1 602.0,365.4 603.0,362.0 604.0,358.1 605.0,353.8 606.0,349.5 607.0,345.3 608.0,341.6 609.0,338.5 610.0,336.2 611.0,334.8 612.0,334.5 613.0,335.2 614.0,336.9 615.0,339.5 616.0,342.9 617.0,346.8 618.0,351.0 619.0,355.3 620.0,359.5 621.0,363.3 622.0,366.5 623.0,368.8 624.0,370.3 625.0,370.7 626.0,370.1 627.0,368.5 628.0,365.9 629.0,362.7 630.0,358.8 631.0,354.6 632.0,350.2 633.0,346.0 634.0,342.2 635.0,339.0 636.0,336.5 637.0,335.0 638.0,334.5 639.0,335.0 640.0,336.5 641.0,339.0 642.0,342.2 643.0,346.0 644.0,350.2 645.0,354.6 646.0,358.8 647.0,362.7 648.0,365.9 649.0,368.5 650.0,370.1 651.0,370.7 652.0,370.3 653.0,368.8 654.0,366.5 655.0,363.3 656.0,359.5 657.0,355.3 658.0,351.0 659.0,346.8 660.0,342.9 661.0,339.5 662.0,336.9 663.0,335.2 664.0,334.5 665.0,334.8 666.0,336.2 667.0,338.5 668.0,341.6 669.0,345.3 670.0,349.5 671.0,353.8 672.0,358.1 673.0,362.0 674.0,365.4 675.0,368.1 676.0,369.9 677.0,370.7 678.0,370.4 679.0,369.2 680.0,367.0 681.0,363.9 682.0,360.2 683.0,356.1 684.0,351.8 685.0,347.5 686.0,343.5 687.0,340.1 688.0,337.3 689.0,335.5 690.0,334.6 691.0,334.7 692.0,335.9 693.0,338.0 694.0,341.0 695.0,344.6 696.0,348.7 697.0,353.0 698.0,357.3 699.0,361.3 700.0,364.8 701.0,367.7 702.0,369.6 703.0,370.6 704.0,370.5 705.0,369.5 706.0,367.4 707.0,364.5 708.0,360.9 709.0,356.9 710.0,352.6 711.0,348.3 712.0,344.2 713.0,340.6 714.0,337.8 715.0,335.7 716.0,334.7 717.0,334.6 718.0,335.6 719.0,337.6 720.0,340.4 721.0,343.9 722.0,347.9 723.0,352.2 724.0,356.5 725.0,360.6 726.0,364.3 727.0,367.2 728.0,369.3 729.0,370.5 730.0,370.6 731.0,369.7 732.0,367.8 733.0,365.1 734.0,361.6 735.0,357.6 736.0,353.4 737.0,349.0 738.0,344.9 739.0,341.2 740.0,338.2 741.0,336.0 742.0,334.8 743.0,334.5 744.0,335.3 745.0,337.1 746.0,339.8 747.0,343.2 748.0,347.2 749.0,351.4 750.0,355.8 751.0,359.9 752.0,363.6 753.0,366.7 754.0,369.0 755.0,370.4 756.0,370.7 757.0,370.0 758.0,368.3 759.0,365.6 760.0,362.3 761.0,358.4 762.0,354.1 763.0,349.8 764.0,345.6 765.0,341.9 766.0,338.7 767.0,336.3 768.0,334.9 769.0,334.5 770.0,335.1 771.0,336.8 772.0,339.3 773.0,342.6 774.0,346.4 775.0,350.7 776.0,355.0 777.0,359.2 778.0,363.0 779.0,366.2 780.0,368.7 781.0,370.2 782.0,370.7 783.0,370.2 784.0,368.6 785.0,366.2 786.0,362.9 787.0,359.1 788.0,354.9 789.0,350.6 790.0,346.4 791.0,342.5 792.0,339.2 793.0,336.7 794.0,335.1 795.0,334.5 796.0,334.9 797.0,336.4 798.0,338.8 799.0,341.9 800.0,345.7 801.0,349.9 802.0,354.2 803.0,358.5 804.0,362.4 805.0,365.7 806.0,368.3 807.0,370.0 808.0,370.7 809.0,370.3 810.0,369.0 811.0,366.7 812.0,363.6 813.0,359.8 814.0,355.7 815.0,351.4 816.0,347.1 817.0,343.2 818.0,339.8 819.0,337.1 820.0,335.3 821.0,334.5 822.0,334.8 823.0,336.1 824.0,338.3 825.0,341.3 826.0,345.0 827.0,349.1 828.0,353.4 829.0,357.7 830.0,361.7 831.0,365.2 832.0,367.9 833.0,369.8 834.0,370.6 835.0,370.5 836.0,369.3 837.0,367.2 838.0,364.2 839.0,360.6 840.0,356.5 841.0,352.1 842.0,347.9 843.0,343.8 844.0,340.3 845.0,337.5 846.0,335.6 847.0,334.6 848.0,334.7 849.0,335.8 850.0,337.8 851.0,340.7 852.0,344.3 853.0,348.4 854.0,352.7 855.0,357.0 856.0,361.0 857.0,364.6 858.0,367.5 859.0,369.5 860.0,370.6 861.0,370.6 862.0,369.6 863.0,367.6 864.0,364.8 865.0,361.2 866.0,357.2 867.0,352.9 868.0,348.6 869.0,344.5 870.0,340.9 871.0,338.0 872.0,335.9 873.0,334.7 874.0,334.6 875.0,335.5 876.0,337.4 877.0,340.1 878.0,343.6 879.0,347.6 880.0,351.9 881.0,356.2 882.0,360.3 883.0,364.0 884.0,367.0 885.0,369.2 886.0,370.4 887.0,370.7 888.0,369.8 889.0,368.0 890.0,365.3 891.0,361.9 892.0,358.0 893.0,353.7 894.0,349.4 895.0,345.2 896.0,341.5 897.0,338.4 898.0,336.2 899.0,334.8 900.0,334.5 901.0,335.2 902.0,337.0 903.0,339.6 904.0,342.9 905.0,346.9 906.0,351.1 907.0,355.4 908.0,359.6 909.0,363.4 910.0,366.5 911.0,368.9 912.0,370.3 913.0,370.7 914.0,370.1 915.0,368.4 916.0,365.9 917.0,362.6 918.0,358.7 919.0,354.5 920.0,350.2 921.0,346.0 922.0,342.1 923.0,338.9 924.0,336.5 925.0,335.0 926.0,334.5 927.0,335.0 928.0,336.6 929.0,339.1 930.0,342.3 931.0,346.1 932.0,350.3 933.0,354.7 934.0,358.9 935.0,362.7 936.0,366.0 937.0,368.5 938.0,370.1 939.0,370.7 940.0,370.3 941.0,368.8 942.0,366.4 943.0,363.2 944.0,359.4 945.0,355.3 946.0,350.9 947.0,346.7 948.0,342.8 949.0,339.5 950.0,336.9 951.0,335.2 952.0,334.5 953.0,334.9 954.0,336.2 955.0,338.5 956.0,341.7 957.0,345.4 958.0,349.6 959.0,353.9 960.0,358.1 961.0,362.1 962.0,365.5 963.0,368.1 964.0,369.9 965.0,370.7 966.0,370.4 967.0,369.1 968.0,366.9 969.0,363.9 970.0,360.2 971.0,356.0 972.0,351.7 973.0,347.4 974.0,343.5 975.0,340.0 976.0,337.3 977.0,335.4 978.0,334.6 979.0,334.7 980.0,335.9 981.0,338.1 982.0,341.0 983.0,344.7 984.0,348.8 985.0,353.1 986.0,357.4 987.0,361.4 988.0,364.9 989.0,367.7 990.0,369.6 991.0,370.6 992.0,370.5 993.0,369.4 994.0,367.4 995.0,364.5 996.0,360.9 997.0,356.8 998.0,352.5 999.0,348.2 1000.0,344.1 1001.0,340.6 1002.0,337.7 1003.0,335.7 1004.0,334.6 1005.0,334.6 1006.0,335.6 1007.0,337.6 1008.0,340.5 1009.0,344.0 1010.0,348.0 1011.0,352.3 1012.0,356.6 1013.0,360.7 1014.0,364.3 1015.0,367.3 1016.0,369.4 1017.0,370.5 1018.0,370.6 1019.0,369.7 1020.0,367.8 1021.0,365.0 1022.0,361.5 1023.0,357.6 1024.0,353.3 1025.0,349.0 1026.0,344.8 1027.0,341.2 1028.0,338.2 1029.0,336.0 1030.0,334.8 1031.0,334.5 1032.0,335.4 1033.0,337.2 1034.0,339.9 1035.0,343.3 1036.0,347.3 1037.0,351.5 1038.0,355.9 1039.0,360.0 1040.0,363.7 1041.0,366.8 1042.0,369.1 1043.0,370.4 1044.0,370.7 1045.0,369.9 1046.0,368.2 1047.0,365.6 1048.0,362.2 1049.0,358.3 1050.0,354.1 1051.0,349.7 1052.0,345.6 1053.0,341.8 1054.0,338.7 1055.0,336.3 1056.0,334.9 1057.0,334.5 1058.0,335.2 1059.0,336.8 1060.0,339.3 1061.0,342.7 1062.0,346.5 1063.0,350.8 1064.0,355.1 1065.0,359.3 1066.0,363.1 1067.0,366.3 1068.0,368.7 1069.0,370.2 1070.0,370.7 1071.0,370.1 1072.0,368.6 1073.0,366.1 1074.0,362.9 1075.0,359.0 1076.0,354.8 1077.0,350.5 1078.0,346.3 1079.0,342.4 1080.0,339.2 1081.0,336.7 1082.0,335.1 1083.0,334.5 1084.0,335.0 1085.0,336.4 1086.0,338.8 1087.0,342.0 1088.0,345.8 1089.0,350.0 1090.0,354.3 1091.0,358.5 1092.0,362.4 1093.0,365.8 1094.0,368.3 1095.0,370.0 1096.0,370.7 1097.0,370.3 1098.0,368.9 1099.0,366.6 1100.0,363.5 1101.0,359.8 1102.0,355.6 1103.0,351.3 1104.0,347.0 1105.0,343.1 1106.0,339.7 1107.0,337.1 1108.0,335.3 1109.0,334.5 1110.0,334.8 1111.0,336.1 1112.0,338.3 1113.0,341.4 1114.0,345.1 1115.0,349.2 1116.0,353.5 1117.0,357.8 1118.0,361.8 1119.0,365.2 1120.0,367.9 1121.0,369.8 1122.0,370.6 1123.0,370.5 1124.0,369.3 1125.0,367.1 1126.0,364.1 1127.0,360.5 1128.0,356.4 1129.0,352.1 1130.0,347.8 1131.0,343.8 1132.0,340.3 1133.0,337.5 1134.0,335.5 1135.0,334.6 1136.0,334.7 1137.0,335.8 1138.0,337.9 1139.0,340.8 1140.0,344.4 1141.0,348.4 1142.0,352.8 1143.0,357.0 1144.0,361.1 1145.0,364.6 1146.0,367.5 1147.0,369.5 1148.0,370.6 1149.0,370.6 1150.0,369.6 1151.0,367.6 1152.0,364.7 1153.0,361.2 1154.0,357.1 1155.0,352.8 1156.0,348.5 1157.0,344.5 1158.0,340.8 1159.0,337.9 1160.0,335.8 1161.0,334.7 1162.0,334.6 1163.0,335.5 1164.0,337.4 1165.0,340.2 1166.0,343.7 1167.0,347.7 1168.0,352.0 1169.0,356.3 1170.0,360.4 1171.0,364.1 1172.0,367.1 1173.0,369.2 1174.0,370.5 1175.0,370.6 1176.0,369.8 1177.0,368.0 1178.0,365.3 1179.0,361.8 1180.0,357.9 1181.0,353.6 1182.0,349.3 1183.0,345.2 1184.0,341.5 1185.0,338.4 1186.0,336.1 1187.0,334.8 1188.0,334.5 1189.0,335.3 1190.0,337.0 1191.0,339.6 1192.0,343.0 1193.0,346.9 1194.0,351.2 1195.0,355.5 1196.0,359.7 1197.0,363.4 1198.0,366.6 1199.0,368.9 1200.0,370.3 1201.0,370.7 1202.0,370.0 1203.0,368.4 1204.0,365.8 1205.0,362.5 1206.0,358.6 1207.0,354.4 1208.0,350.1 1209.0,345.9 1210.0,342.1 1211.0,338.9 1212.0,336.5 1213.0,335.0 1214.0,334.5 1215.0,335.1 1216.0,336.6 1217.0,339.1 1218.0,342.4 1219.0,346.2 1220.0,350.4 1221.0,354.7 1222.0,359.0 1223.0,362.8 1224.0,366.1 1225.0,368.6 1226.0,370.1 1227.0,370.7 1228.0,370.2 1229.0,368.8 1230.0,366.3 1231.0,363.2 1232.0,359.4 1233.0,355.2 1234.0,350.8 1235.0,346.6 1236.0,342.7 1237.0,339.4 1238.0,336.8 1239.0,335.2 1240.0,334.5 1241.0,334.9 1242.0,336.3 1243.0,338.6 1244.0,341.7 1245.0,345.5 1246.0,349.6 1247.0,354.0 1248.0,358.2 1249.0,362.1 1250.0,365.5 1251.0,368.2 1252.0,369.9 1253.0,370.7 1254.0,370.4 1255.0,369.1 1256.0,366.8 1257.0,363.8 1258.0,360.1 1259.0,355.9 1260.0,351.6 1261.0,347.4 1262.0,343.4 1263.0,339.9 1264.0,337.2 1265.0,335.4 1266.0,334.6 1267.0,334.7 1268.0,336.0 1269.0,338.1 1270.0,341.1 1271.0,344.8 1272.0,348.9 1273.0,353.2 1274.0,357.5 1275.0,361.5 1276.0,365.0 1277.0,367.8 1278.0,369.7 1279.0,370.6 1280.0,370.5 1281.0,369.4 1282.0,367.3 1283.0,364.4 1284.0,360.8 1285.0,356.7 1286.0,352.4 1287.0,348.1 1288.0,344.1 1289.0,340.5 1290.0,337.7 1291.0,335.7 1292.0,334.6 1293.0,334.6 1294.0,335.7 1295.0,337.7 1296.0,340.5 1297.0,344.1 1298.0,348.1 1299.0,352.4 1300.0,356.7 1301.0,360.8 1302.0,364.4 1303.0,367.3 1304.0,369.4 1305.0,370.5 1306.0,370.6 1307.0,369.7 1308.0,367.8 1309.0,365.0 1310.0,361.5 1311.0,357.5 1312.0,353.2 1313.0,348.9 1314.0,344.8 1315.0,341.1 1316.0,338.1 1317.0,336.0 1318.0,334.7 1319.0,334.6 1320.0,335.4 1321.0,337.2 1322.0,339.9 1323.0,343.4 1324.0,347.4 1325.0,351.6 1326.0,355.9 1327.0,360.1 1328.0,363.8 1329.0,366.8 1330.0,369.1 1331.0,370.4 1332.0,370.7 1333.0,369.9 1334.0,368.2 1335.0,365.5 1336.0,362.1 1337.0,358.2 1338.0,354.0 1339.0,349.6 1340.0,345.5 1341.0,341.7 1342.0,338.6 1343.0,336.3 1344.0,334.9 1345.0,334.5 1346.0,335.2 1347.0,336.8 1348.0,339.4 1349.0,342.7 1350.0,346.6 1351.0,350.8 1352.0,355.2 1353.0,359.4 1354.0,363.2 1355.0,366.3 1356.0,368.8 1357.0,370.2 1358.0,370.7 1359.0,370.1 1360.0,368.6 1361.0,366.1 1362.0,362.8 1363.0,359.0 1364.0,354.7 1365.0,350.4 1366.0,346.2 1367.0,342.4 1368.0,339.1 1369.0,336.6 1370.0,335.1 1371.0,334.5 1372.0,335.0 1373.0,336.5 1374.0,338.9 1375.0,342.1 1376.0,345.9 1377.0,350.1 1378.0,354.4 1379.0,358.6 1380.0,362.5 1381.0,365.8 1382.0,368.4 1383.0,370.0 1384.0,370.7 1385.0,370.3 1386.0,368.9 1387.0,366.6 1388.0,363.4 1389.0,359.7 1390.0,355.5 1391.0,351.2 1392.0,346.9 1393.0,343.0 1394.0,339.6 1395.0,337.0 1396.0,335.3 1397.0,334.5 1398.0,334.8 1399.0,336.1 1400.0,338.4 1401.0,341.5 1402.0,345.2 1403.0,349.3 1404.0,353.6 1405.0,357.9 1406.0,361.8 1407.0,365.3 1408.0,368.0 1409.0,369.8 1410.0,370.6 1411.0,370.5 1412.0,369.2 1413.0,367.1 1414.0,364.1 1415.0,360.4 1416.0,356.3 1417.0,352.0 1418.0,347.7 1419.0,343.7 1420.0,340.2 1421.0,337.4 1422.0,335.5 1423.0,334.6 1424.0,334.7 1425.0,335.8 1426.0,337.9 1427.0,340.8 1428.0,344.5" fill="none" stroke="#FF0000" stroke-width="1" shape-rendering="crispEdges"/><rect x="922.5" y="333.5" width="10" height="10" fill="none" stroke="#482E96" stroke-width="1"/><path d="M920,338.5 H935 M927.5,343 V346" stroke="#482E96" stroke-width="1"/><rect x="922.5" y="330.5" width="10" height="10" fill="none" stroke="#F00" stroke-width="1"/><path d="M920,335.5 H935 M927.5,328 V343" stroke="#F00" stroke-width="1"/></svg>
<div style="left:298px;top:202.0px;height:20px;line-height:20px;font-size:12px;color:#503C9C;white-space:pre;width:40px;text-align:right;">20</div>
<div style="left:298px;top:253.95000000000005px;height:20px;line-height:20px;font-size:12px;color:#503C9C;white-space:pre;width:40px;text-align:right;">12</div>
<div style="left:298px;top:283.5px;height:20px;line-height:20px;font-size:12px;color:#503C9C;white-space:pre;width:40px;text-align:right;">8</div>
<div style="left:298px;top:313.05px;height:20px;line-height:20px;font-size:12px;color:#503C9C;white-space:pre;width:40px;text-align:right;">4</div>
<div style="left:298px;top:342.6px;height:20px;line-height:20px;font-size:12px;color:#503C9C;white-space:pre;width:40px;text-align:right;">0</div>
<div style="left:298px;top:372.15000000000003px;height:20px;line-height:20px;font-size:12px;color:#503C9C;white-space:pre;width:40px;text-align:right;">-4</div>
<div style="left:298px;top:401.70000000000005px;height:20px;line-height:20px;font-size:12px;color:#503C9C;white-space:pre;width:40px;text-align:right;">-8</div>
<div style="left:298px;top:431.25px;height:20px;line-height:20px;font-size:12px;color:#503C9C;white-space:pre;width:40px;text-align:right;">-12</div>
<div style="left:298px;top:483.5px;height:20px;line-height:20px;font-size:12px;color:#503C9C;white-space:pre;width:40px;text-align:right;">-20</div>
<div style="left:352px;top:511.5px;height:20px;line-height:20px;font-size:12px;color:#503C9C;white-space:pre;">0</div>
<div style="left:375.21px;top:511.5px;height:20px;line-height:20px;font-size:12px;color:#503C9C;white-space:pre;width:61px;text-align:center;">0.005</div>
<div style="left:429.02px;top:511.5px;height:20px;line-height:20px;font-size:12px;color:#503C9C;white-space:pre;width:61px;text-align:center;">0.01</div>
<div style="left:482.83000000000004px;top:511.5px;height:20px;line-height:20px;font-size:12px;color:#503C9C;white-space:pre;width:61px;text-align:center;">0.015</div>
<div style="left:536.64px;top:511.5px;height:20px;line-height:20px;font-size:12px;color:#503C9C;white-space:pre;width:61px;text-align:center;">0.02</div>
<div style="left:590.4499999999999px;top:511.5px;height:20px;line-height:20px;font-size:12px;color:#503C9C;white-space:pre;width:61px;text-align:center;">0.025</div>
<div style="left:644.26px;top:511.5px;height:20px;line-height:20px;font-size:12px;color:#503C9C;white-space:pre;width:61px;text-align:center;">0.03</div>
<div style="left:698.07px;top:511.5px;height:20px;line-height:20px;font-size:12px;color:#503C9C;white-space:pre;width:61px;text-align:center;">0.035</div>
<div style="left:751.88px;top:511.5px;height:20px;line-height:20px;font-size:12px;color:#503C9C;white-space:pre;width:61px;text-align:center;">0.04</div>
<div style="left:805.6899999999999px;top:511.5px;height:20px;line-height:20px;font-size:12px;color:#503C9C;white-space:pre;width:61px;text-align:center;">0.045</div>
<div style="left:859.5px;top:511.5px;height:20px;line-height:20px;font-size:12px;color:#503C9C;white-space:pre;width:61px;text-align:center;">0.05</div>
<div style="left:913.3100000000001px;top:511.5px;height:20px;line-height:20px;font-size:12px;color:#503C9C;white-space:pre;width:61px;text-align:center;">0.055</div>
<div style="left:967.12px;top:511.5px;height:20px;line-height:20px;font-size:12px;color:#503C9C;white-space:pre;width:61px;text-align:center;">0.06</div>
<div style="left:1020.93px;top:511.5px;height:20px;line-height:20px;font-size:12px;color:#503C9C;white-space:pre;width:61px;text-align:center;">0.065</div>
<div style="left:1074.7400000000002px;top:511.5px;height:20px;line-height:20px;font-size:12px;color:#503C9C;white-space:pre;width:61px;text-align:center;">0.07</div>
<div style="left:1128.5500000000002px;top:511.5px;height:20px;line-height:20px;font-size:12px;color:#503C9C;white-space:pre;width:61px;text-align:center;">0.075</div>
<div style="left:1182.3600000000001px;top:511.5px;height:20px;line-height:20px;font-size:12px;color:#503C9C;white-space:pre;width:61px;text-align:center;">0.08</div>
<div style="left:1236.17px;top:511.5px;height:20px;line-height:20px;font-size:12px;color:#503C9C;white-space:pre;width:61px;text-align:center;">0.085</div>
<div style="left:1289.98px;top:511.5px;height:20px;line-height:20px;font-size:12px;color:#503C9C;white-space:pre;width:61px;text-align:center;">0.09</div>
<div style="left:1343.7900000000002px;top:511.5px;height:20px;line-height:20px;font-size:12px;color:#503C9C;white-space:pre;width:61px;text-align:center;">0.095</div>
<div style="left:1388px;top:511.5px;height:20px;line-height:20px;font-size:12px;color:#503C9C;white-space:pre;width:40px;text-align:right;">0.1</div>
<div style="left:880px;top:528.5px;height:20px;line-height:20px;font-size:12px;color:#503C9C;white-space:pre;">Sec</div>
<div style="left:279px;top:342.0px;height:20px;line-height:20px;font-size:12px;color:#503C9C;white-space:pre;width:14px;text-align:center;transform:rotate(-90deg);">g</div>
<div style="left:689px;top:164.0px;height:20px;line-height:20px;font-size:42.6px;color:#FF0000;white-space:pre;font-weight:bold;font-style:italic;height:50px;line-height:50px;top:149.8px;">Road Simulation</div>
<div style="left:1299px;top:162.5px;height:20px;line-height:20px;font-size:10.5px;color:#000;white-space:pre;letter-spacing:-0.2px;font-weight:bold;">BandWidth: 1600</div>
<div style="left:1299px;top:178.5px;height:20px;line-height:20px;font-size:10.5px;color:#000;white-space:pre;letter-spacing:-0.12px;font-weight:bold;">Resolution: 1600</div>
<div style="left:354px;top:180px;width:112px;height:21px;background:#fff;"></div>
<div style="left:356.4px;top:179.5px;height:20px;line-height:20px;font-size:12px;color:#503C9C;white-space:pre;">Time Trace g CH 1</div>
<div style="left:358px;top:197px;width:105px;height:1.2px;background:#503C9C;"></div>
<div style="left:482px;top:180px;width:132px;height:21px;background:#fff;"></div>
<div style="left:484.4px;top:179.5px;height:20px;line-height:20px;font-size:12px;color:#FF0000;white-space:pre;">Time Trace g DriveRef</div>
<div style="left:486px;top:197px;width:125px;height:1.2px;background:#FF0000;"></div>
<div style="left:360px;top:209.5px;height:20px;line-height:20px;font-size:12px;color:#503C9C;white-space:pre;">x: 0.0534668, y: 2.02163 Locked</div>
<div style="left:360px;top:224.5px;height:20px;line-height:20px;font-size:12px;color:#FF0000;white-space:pre;">x: 0.0534668, y: 2.45196 Locked</div>
<div style="left:353px;top:624px;width:1075px;height:296px;background:#fff;"></div>
<svg style="left:0px;top:0px;pointer-events:none;" width="1916" height="1026" viewBox="0 0 1916 1026"><path d="M353,897.5 H1428" stroke="#B3D2F9" stroke-width="1" stroke-dasharray="3,3"/><path d="M353,874.5 H1428" stroke="#B3D2F9" stroke-width="1" stroke-dasharray="3,3"/><path d="M353,851.5 H1428" stroke="#B3D2F9" stroke-width="1" stroke-dasharray="3,3"/><path d="M353,829.5 H1428" stroke="#B3D2F9" stroke-width="1" stroke-dasharray="3,3"/><path d="M353,806.5 H1428" stroke="#B3D2F9" stroke-width="1" stroke-dasharray="3,3"/><path d="M353,783.5 H1428" stroke="#B3D2F9" stroke-width="1" stroke-dasharray="3,3"/><path d="M353,760.5 H1428" stroke="#B3D2F9" stroke-width="1" stroke-dasharray="3,3"/><path d="M353,737.5 H1428" stroke="#B3D2F9" stroke-width="1" stroke-dasharray="3,3"/><path d="M353,715.5 H1428" stroke="#B3D2F9" stroke-width="1" stroke-dasharray="3,3"/><path d="M353,692.5 H1428" stroke="#B3D2F9" stroke-width="1" stroke-dasharray="3,3"/><path d="M353,669.5 H1428" stroke="#B3D2F9" stroke-width="1" stroke-dasharray="3,3"/><path d="M353,646.5 H1428" stroke="#B3D2F9" stroke-width="1" stroke-dasharray="3,3"/><path d="M555.5,624 V920" stroke="#B3D2F9" stroke-width="1" stroke-dasharray="3,3"/><path d="M757.5,624 V920" stroke="#B3D2F9" stroke-width="1" stroke-dasharray="3,3"/><path d="M1024.5,624 V920" stroke="#B3D2F9" stroke-width="1" stroke-dasharray="3,3"/><path d="M1226.5,624 V920" stroke="#B3D2F9" stroke-width="1" stroke-dasharray="3,3"/><path d="M344,920.5 H351" stroke="#503C9C" stroke-width="1"/><path d="M347,897.5 H351" stroke="#503C9C" stroke-width="1"/><path d="M344,874.5 H351" stroke="#503C9C" stroke-width="1"/><path d="M347,851.5 H351" stroke="#503C9C" stroke-width="1"/><path d="M344,829.5 H351" stroke="#503C9C" stroke-width="1"/><path d="M347,806.5 H351" stroke="#503C9C" stroke-width="1"/><path d="M344,783.5 H351" stroke="#503C9C" stroke-width="1"/><path d="M347,760.5 H351" stroke="#503C9C" stroke-width="1"/><path d="M344,737.5 H351" stroke="#503C9C" stroke-width="1"/><path d="M347,715.5 H351" stroke="#503C9C" stroke-width="1"/><path d="M344,692.5 H351" stroke="#503C9C" stroke-width="1"/><path d="M347,669.5 H351" stroke="#503C9C" stroke-width="1"/><path d="M344,646.5 H351" stroke="#503C9C" stroke-width="1"/><path d="M344,623.5 H351" stroke="#503C9C" stroke-width="1"/><path d="M352.5,922 V929" stroke="#503C9C" stroke-width="1"/><path d="M555.5,922 V929" stroke="#503C9C" stroke-width="1"/><path d="M757.5,922 V929" stroke="#503C9C" stroke-width="1"/><path d="M1024.5,922 V929" stroke="#503C9C" stroke-width="1"/><path d="M1226.5,922 V929" stroke="#503C9C" stroke-width="1"/><path d="M1427.5,922 V929" stroke="#503C9C" stroke-width="1"/><polyline points="353.1,918.8 586.8,918.8 762.3,918.6 850.0,918.3 893.9,917.5 915.8,915.7 933.3,914.4 944.3,910.9 951.8,906.5 957.5,899.9 960.5,893.3 962.7,882.4 964.0,867.0 965.1,823.2 966.2,757.4 967.3,691.6 968.4,647.7 969.3,639.8 970.0,654.3 970.6,649.9 971.7,646.8 972.4,669.6 973.2,713.5 974.1,766.1 975.0,823.2 976.1,867.0 977.2,882.4 979.4,893.3 982.5,901.2 988.2,907.4 996.9,911.3 1007.9,913.9 1025.4,916.1 1056.1,917.9 1086.8,918.6 1157.0,918.8 1363.2,918.9" fill="none" stroke="#482E96" stroke-width="1" shape-rendering="crispEdges"/><rect x="929.5" y="909.5" width="10" height="10" fill="none" stroke="#482E96" stroke-width="1"/><path d="M934.5,907 V912 M934.5,917 V920 M934.5,921 V922 M926,914.5 H933 M937,914.5 H942" stroke="#482E96" stroke-width="1"/></svg>
<div style="left:299px;top:621.5px;height:20px;line-height:20px;font-size:12px;color:#503C9C;white-space:pre;width:40px;text-align:right;">1.3</div>
<div style="left:299px;top:682.6000000000001px;height:20px;line-height:20px;font-size:12px;color:#503C9C;white-space:pre;width:40px;text-align:right;">1</div>
<div style="left:299px;top:728.1400000000001px;height:20px;line-height:20px;font-size:12px;color:#503C9C;white-space:pre;width:40px;text-align:right;">0.8</div>
<div style="left:299px;top:773.6800000000001px;height:20px;line-height:20px;font-size:12px;color:#503C9C;white-space:pre;width:40px;text-align:right;">0.6</div>
<div style="left:299px;top:819.22px;height:20px;line-height:20px;font-size:12px;color:#503C9C;white-space:pre;width:40px;text-align:right;">0.4</div>
<div style="left:299px;top:864.7600000000001px;height:20px;line-height:20px;font-size:12px;color:#503C9C;white-space:pre;width:40px;text-align:right;">0.2</div>
<div style="left:299px;top:902.5px;height:20px;line-height:20px;font-size:12px;color:#503C9C;white-space:pre;width:40px;text-align:right;">0</div>
<div style="left:352.5px;top:930.5px;height:20px;line-height:20px;font-size:12px;color:#503C9C;white-space:pre;">50</div>
<div style="left:524.9911270905313px;top:930.5px;height:20px;line-height:20px;font-size:12px;color:#503C9C;white-space:pre;width:61px;text-align:center;">100</div>
<div style="left:726.9822541810628px;top:930.5px;height:20px;line-height:20px;font-size:12px;color:#503C9C;white-space:pre;width:61px;text-align:center;">200</div>
<div style="left:994.0px;top:930.5px;height:20px;line-height:20px;font-size:12px;color:#503C9C;white-space:pre;width:61px;text-align:center;">500</div>
<div style="left:1195.9911270905313px;top:930.5px;height:20px;line-height:20px;font-size:12px;color:#503C9C;white-space:pre;width:61px;text-align:center;">1000</div>
<div style="left:1388px;top:930.5px;height:20px;line-height:20px;font-size:12px;color:#503C9C;white-space:pre;width:40px;text-align:right;">2000</div>
<div style="left:867px;top:947.5px;height:20px;line-height:20px;font-size:12px;color:#503C9C;white-space:pre;">Hz (Log)</div>
<div style="left:279px;top:761.0px;height:20px;line-height:20px;font-size:12px;color:#503C9C;white-space:pre;width:14px;text-align:center;transform:rotate(-90deg);">g</div>
<div style="left:354px;top:599px;width:98px;height:21px;background:#fff;"></div>
<div style="left:356.4px;top:598.5px;height:20px;line-height:20px;font-size:12px;color:#503C9C;white-space:pre;">Lin Spec g CH 1</div>
<div style="left:358px;top:616px;width:91px;height:1.2px;background:#503C9C;"></div>
<div style="left:360px;top:628.5px;height:20px;line-height:20px;font-size:12px;color:#503C9C;white-space:pre;">x: 368, y: 0.0283688 Locked</div>
<div style="left:1446.5px;top:138.5px;width:470px;height:19.5px;background:#BACEE8;"></div>
<div style="left:1451px;top:138.2px;height:20px;line-height:20px;font-size:11.5px;color:#15428B;white-space:pre;letter-spacing:-0.207px;">Library</div>
<svg style="left:1889.5px;top:143.5px;" width="8" height="9" viewBox="0 0 8 9"><path d="M1.8,0.6 H6.2 M2.4,0.6 V4.6 M5.2,0.6 V4.6 M6,0.6 V4.6 M0.5,4.8 H7.5 M4,5 V8.5" fill="none" stroke="#3A5F9E" stroke-width="1.1"/></svg>
<svg style="left:1905.5px;top:144px;" width="9" height="8" viewBox="0 0 9 8"><path d="M0.8,0.6 L8,7 M8,0.6 L0.8,7" stroke="#3A5F9E" stroke-width="1.5"/></svg>
<div style="left:1446.5px;top:158px;width:470px;height:28px;background:linear-gradient(#E1ECFB 0%,#D6E6FA 40%,#C2D9F7 75%,#BDD6F6 100%);"></div>
<div style="left:1452.5px;top:163.5px;width:116px;height:19.5px;background:#fff;border:1px solid #D5E3F5;"></div>
<div style="left:1554px;top:164.5px;width:13.5px;height:17.5px;background:#CFE0F7;"></div>
<svg style="left:1557.5px;top:171px;" width="7" height="4" viewBox="0 0 7 4"><path d="M0,0 H6.6 L3.3,3.8 Z" fill="#4D6DA3"/></svg>
<div style="left:1455.5px;top:163.5px;height:20px;line-height:20px;font-size:11.5px;color:#000;white-space:pre;letter-spacing:-0.2px;">Tag</div>
<div style="left:1574px;top:166px;width:1px;height:15px;background:#7F9BC4;"></div>
<div style="left:1575px;top:166px;width:1px;height:15px;background:#EEF5FF;"></div>
<div style="left:1581px;top:164px;width:146px;height:19px;background:#EFEFEF;border:1px solid #A3A3A3;box-shadow:0 0 0 1px #F7FAFF;"></div>
<div style="left:1584px;top:163.5px;height:20px;line-height:20px;font-size:11.5px;color:#000;white-space:pre;letter-spacing:0.01px;">Replication</div>
<svg style="left:1716px;top:171px;" width="7" height="4" viewBox="0 0 7 4"><path d="M0,0 H6.6 L3.3,3.8 Z" fill="#6d6d6d"/></svg>
<div style="left:1732px;top:166px;width:1px;height:15px;background:#7F9BC4;"></div>
<div style="left:1733px;top:166px;width:1px;height:15px;background:#EEF5FF;"></div>
<svg style="left:1740px;top:164px;" width="17" height="17" viewBox="0 0 17 17"><path d="M5,10.5 L0.8,5.5 A2.6,2.6 0 0 1 5,2.5 A2.6,2.6 0 0 1 9.2,5.5 Z" fill="#9C9C9C"/><path d="M5,9 V16" stroke="#9C9C9C" stroke-width="1"/><path d="M8,9 H15 M8,11.5 H15 M8,14 H15 M8,16.5 H15" stroke="#9C9C9C" stroke-width="1"/></svg>
<svg style="left:1762px;top:164px;" width="18" height="16" viewBox="0 0 18 16"><path d="M1,13 V5 H5 L6.5,6.5 H11 V8" fill="#9C9C9C" stroke="#9C9C9C" stroke-width="0.8"/><path d="M1,13 L4,8 H15.5 L12.5,13 Z" fill="#ADADAD" stroke="#9C9C9C" stroke-width="0.8"/><path d="M9.5,3.5 Q12.5,0.5 15,3.7 M15.6,1.5 V4.5 H12.8" fill="none" stroke="#9C9C9C" stroke-width="1"/></svg>
<svg style="left:1784px;top:163px;" width="16" height="18" viewBox="0 0 16 18"><path d="M11,15.5 A6,6 0 1 1 11,5" fill="none" stroke="#9C9C9C" stroke-width="1.1"/><path d="M8,1.5 L11.5,4 L8,6.5" fill="none" stroke="#9C9C9C" stroke-width="1.1"/><path d="M5,13 V9 H7.5 L8.5,10 H13.5 V13 Z" fill="#9C9C9C"/></svg>
<div style="left:1446.5px;top:185.5px;width:470px;height:2.5px;background:#BFDBFF;"></div>
<svg style="left:1508px;top:185px;" width="150" height="2" viewBox="0 0 150 2"><path d="M0,1 H6 M12,1 H40 M47,1 H90 M98,1 H108 M113,1 H136" stroke="#3a3a55" stroke-width="1" stroke-dasharray="2,1.5,1,2,3,1"/></svg>
<div style="left:1449.5px;top:187.5px;width:466px;height:796.5px;background:#F0F0F0;border-top:1px solid #fff;border-left:1px solid #fff;"></div>
<div style="left:1446px;top:186px;width:1px;height:798.5px;background:#B5CCEB;"></div>
<div style="left:1447px;top:186px;width:2px;height:798.5px;background:#D5E3F1;"></div>
<div style="left:1449px;top:186px;width:1px;height:798.5px;background:#E6E6E6;"></div>
<div style="left:1450px;top:186px;width:2px;height:797px;background:#fff;"></div>
<div style="left:1453.7px;top:191.0px;height:20px;line-height:20px;font-size:11.5px;color:#000;white-space:pre;letter-spacing:-0.504px;">Channel:</div>
<div style="left:1503px;top:190px;width:43.5px;height:21.5px;background:#fff;border:1px solid #EDEDED;border-bottom:1px solid #8E8E8E;"></div>
<div style="left:1503px;top:187.5px;height:20px;line-height:20px;font-size:11px;color:#000;white-space:pre;width:39px;text-align:right;">1</div>
<div style="left:1452px;top:213px;width:462px;height:769px;background:#fff;border-top:1px solid #828790;border-left:1px solid #828790;border-right:1px solid #828790;border-bottom:2px solid #6d6d6d;"></div>
<div style="left:1458px;top:213.0px;height:20px;line-height:20px;font-size:11px;color:#000;white-space:pre;letter-spacing:-0.25px;">Library</div>
<div style="left:1477px;top:229.0px;height:20px;line-height:20px;font-size:11px;color:#000;white-space:pre;letter-spacing:-0.25px;">Favourites</div>
<div style="left:1477px;top:245.0px;height:20px;line-height:20px;font-size:11px;color:#000;white-space:pre;letter-spacing:-0.25px;">Custom</div>
<div style="left:1477px;top:261.0px;height:20px;line-height:20px;font-size:11px;color:#000;white-space:pre;letter-spacing:-0.25px;">Setup</div>
<div style="left:1496px;top:277.0px;height:20px;line-height:20px;font-size:11px;color:#000;white-space:pre;letter-spacing:-0.25px;">Channel</div>
<div style="left:1496px;top:293.0px;height:20px;line-height:20px;font-size:11px;color:#000;white-space:pre;letter-spacing:-0.25px;">User Name</div>
<div style="left:1496px;top:309.0px;height:20px;line-height:20px;font-size:11px;color:#000;white-space:pre;letter-spacing:-0.25px;">Bandwidth</div>
<div style="left:1496px;top:325.0px;height:20px;line-height:20px;font-size:11px;color:#000;white-space:pre;letter-spacing:-0.25px;">Resolution</div>
<div style="left:1496px;top:341.0px;height:20px;line-height:20px;font-size:11px;color:#000;white-space:pre;letter-spacing:-0.25px;">Acquisition Setup</div>
<div style="left:1477px;top:357.0px;height:20px;line-height:20px;font-size:11px;color:#000;white-space:pre;letter-spacing:-0.25px;">Test Status</div>
<div style="left:1496px;top:373.0px;height:20px;line-height:20px;font-size:11px;color:#000;white-space:pre;letter-spacing:-0.25px;">Average</div>
<div style="left:1477px;top:389.0px;height:20px;line-height:20px;font-size:11px;color:#000;white-space:pre;letter-spacing:-0.25px;">Channel Status</div>
<div style="left:1496px;top:405.0px;height:20px;line-height:20px;font-size:11px;color:#000;white-space:pre;letter-spacing:-0.25px;">Level</div>
<div style="left:1496px;top:421.0px;height:20px;line-height:20px;font-size:11px;color:#000;white-space:pre;letter-spacing:-0.25px;">Min</div>
<div style="left:1496px;top:437.0px;height:20px;line-height:20px;font-size:11px;color:#000;white-space:pre;letter-spacing:-0.25px;">Max</div>
<div style="left:1496px;top:453.0px;height:20px;line-height:20px;font-size:11px;color:#000;white-space:pre;letter-spacing:-0.25px;">DC Offset</div>
<svg style="left:0px;top:0px;pointer-events:none;" width="1916" height="1026" viewBox="0 0 1916 1026"><path d="M1468.0,239.5 H1476.0" stroke="#808080" stroke-width="1" stroke-dasharray="1,1"/><path d="M1468.0,255.5 H1476.0" stroke="#808080" stroke-width="1" stroke-dasharray="1,1"/><path d="M1472.0,271.5 H1476.0" stroke="#808080" stroke-width="1" stroke-dasharray="1,1"/><rect x="1462.5" y="267.5" width="8" height="8" rx="1" fill="#F4F4F4" stroke="#919191" stroke-width="1"/><path d="M1464.0,271.5 H1469.0" stroke="#2C3FA0" stroke-width="1"/><path d="M1491.0,287.5 H1495.0" stroke="#808080" stroke-width="1" stroke-dasharray="1,1"/><rect x="1481.5" y="283.5" width="8" height="8" rx="1" fill="#F4F4F4" stroke="#919191" stroke-width="1"/><path d="M1483.0,287.5 H1488.0" stroke="#2C3FA0" stroke-width="1"/><path d="M1485.5,285 V290" stroke="#2C3FA0" stroke-width="1"/><path d="M1487.0,303.5 H1495.0" stroke="#808080" stroke-width="1" stroke-dasharray="1,1"/><path d="M1487.0,319.5 H1495.0" stroke="#808080" stroke-width="1" stroke-dasharray="1,1"/><path d="M1487.0,335.5 H1495.0" stroke="#808080" stroke-width="1" stroke-dasharray="1,1"/><path d="M1487.0,351.5 H1495.0" stroke="#808080" stroke-width="1" stroke-dasharray="1,1"/><path d="M1472.0,367.5 H1476.0" stroke="#808080" stroke-width="1" stroke-dasharray="1,1"/><rect x="1462.5" y="363.5" width="8" height="8" rx="1" fill="#F4F4F4" stroke="#919191" stroke-width="1"/><path d="M1464.0,367.5 H1469.0" stroke="#2C3FA0" stroke-width="1"/><path d="M1487.0,383.5 H1495.0" stroke="#808080" stroke-width="1" stroke-dasharray="1,1"/><path d="M1472.0,399.5 H1476.0" stroke="#808080" stroke-width="1" stroke-dasharray="1,1"/><rect x="1462.5" y="395.5" width="8" height="8" rx="1" fill="#F4F4F4" stroke="#919191" stroke-width="1"/><path d="M1464.0,399.5 H1469.0" stroke="#2C3FA0" stroke-width="1"/><path d="M1487.0,415.5 H1495.0" stroke="#808080" stroke-width="1" stroke-dasharray="1,1"/><path d="M1487.0,431.5 H1495.0" stroke="#808080" stroke-width="1" stroke-dasharray="1,1"/><path d="M1487.0,447.5 H1495.0" stroke="#808080" stroke-width="1" stroke-dasharray="1,1"/><path d="M1487.0,463.5 H1495.0" stroke="#808080" stroke-width="1" stroke-dasharray="1,1"/><path d="M1466.5,232 V267 M1466.5,276 V363 M1466.5,372 V395" stroke="#808080" stroke-width="1" stroke-dasharray="1,1"/><path d="M1485.5,279 V283 M1485.5,292 V351" stroke="#808080" stroke-width="1" stroke-dasharray="1,1"/><path d="M1485.5,375 V383" stroke="#808080" stroke-width="1" stroke-dasharray="1,1"/><path d="M1485.5,407 V463" stroke="#808080" stroke-width="1" stroke-dasharray="1,1"/></svg>
<div style="left:1599px;top:940.0px;height:20px;line-height:20px;font-size:19.5px;color:#B4B4B4;white-space:pre;letter-spacing:0.257px;">Activate Windows</div>
<div style="left:1599px;top:962.5px;height:20px;line-height:20px;font-size:15px;color:#BDBDBD;white-space:pre;letter-spacing:-0.022px;">Go to Settings to activate Windows.</div>
<svg style="left:1454px;top:989px;" width="13" height="14" viewBox="0 0 13 14"><rect x="0.5" y="0.5" width="11.5" height="12.5" fill="#fff" stroke="#27278C" stroke-width="1"/><rect x="1" y="1" width="10.5" height="2" fill="#8C8CF0"/><path d="M2.5,5.5 H10 M2.5,8 H10 M2.5,10.5 H10" stroke="#555" stroke-width="1"/></svg>
<div style="left:1470px;top:986.0px;height:20px;line-height:20px;font-size:11.5px;color:#15428B;white-space:pre;letter-spacing:-0.2px;">Log</div>
<div style="left:1498.7px;top:984.5px;width:44.5px;height:20px;background:linear-gradient(#E3ECF8,#F1F6FD);border:1px solid #A6C6EE;border-top:none;border-radius:0 0 4px 4px;box-shadow:inset 1px -1px 0 #fff, inset -1px 0 0 #fff;"></div>
<div style="left:1503.5px;top:986.0px;height:20px;line-height:20px;font-size:11.5px;color:#15428B;white-space:pre;letter-spacing:-0.207px;">Library</div>
<div style="left:0px;top:1008px;width:1916px;height:1px;background:#6F9DD9;"></div>
<div style="left:0px;top:1009px;width:1916px;height:17px;background:linear-gradient(#E4EFFC 0px,#D6E5FA 3px,#C4D9F6 6px,#B3CDF1 8px,#B7D0F3 17px);"></div>
<div style="left:0px;top:1009px;width:1916px;height:1px;background:#fff;"></div>
<div style="left:3px;top:1009.5px;height:20px;line-height:20px;font-size:11.5px;color:#15428B;white-space:pre;letter-spacing:-0.216px;">Saving Data: Record</div>
<div style="left:1812.5px;top:1009px;width:1.5px;height:17px;background:#8EB1E3;"></div>
<div style="left:1811.5px;top:1009px;width:1px;height:17px;background:#F2F7FF;"></div>
<div style="left:1814px;top:1009px;width:102px;height:17px;background:linear-gradient(#C4D8F4 0px,#ABC6EE 4px,#8FB0E2 8px,#8BADE1 17px);"></div>
<div style="left:1829.5px;top:1009.5px;height:20px;line-height:20px;font-size:11.5px;color:#15428B;white-space:pre;letter-spacing:0.043px;">Online</div>
</body></html>
